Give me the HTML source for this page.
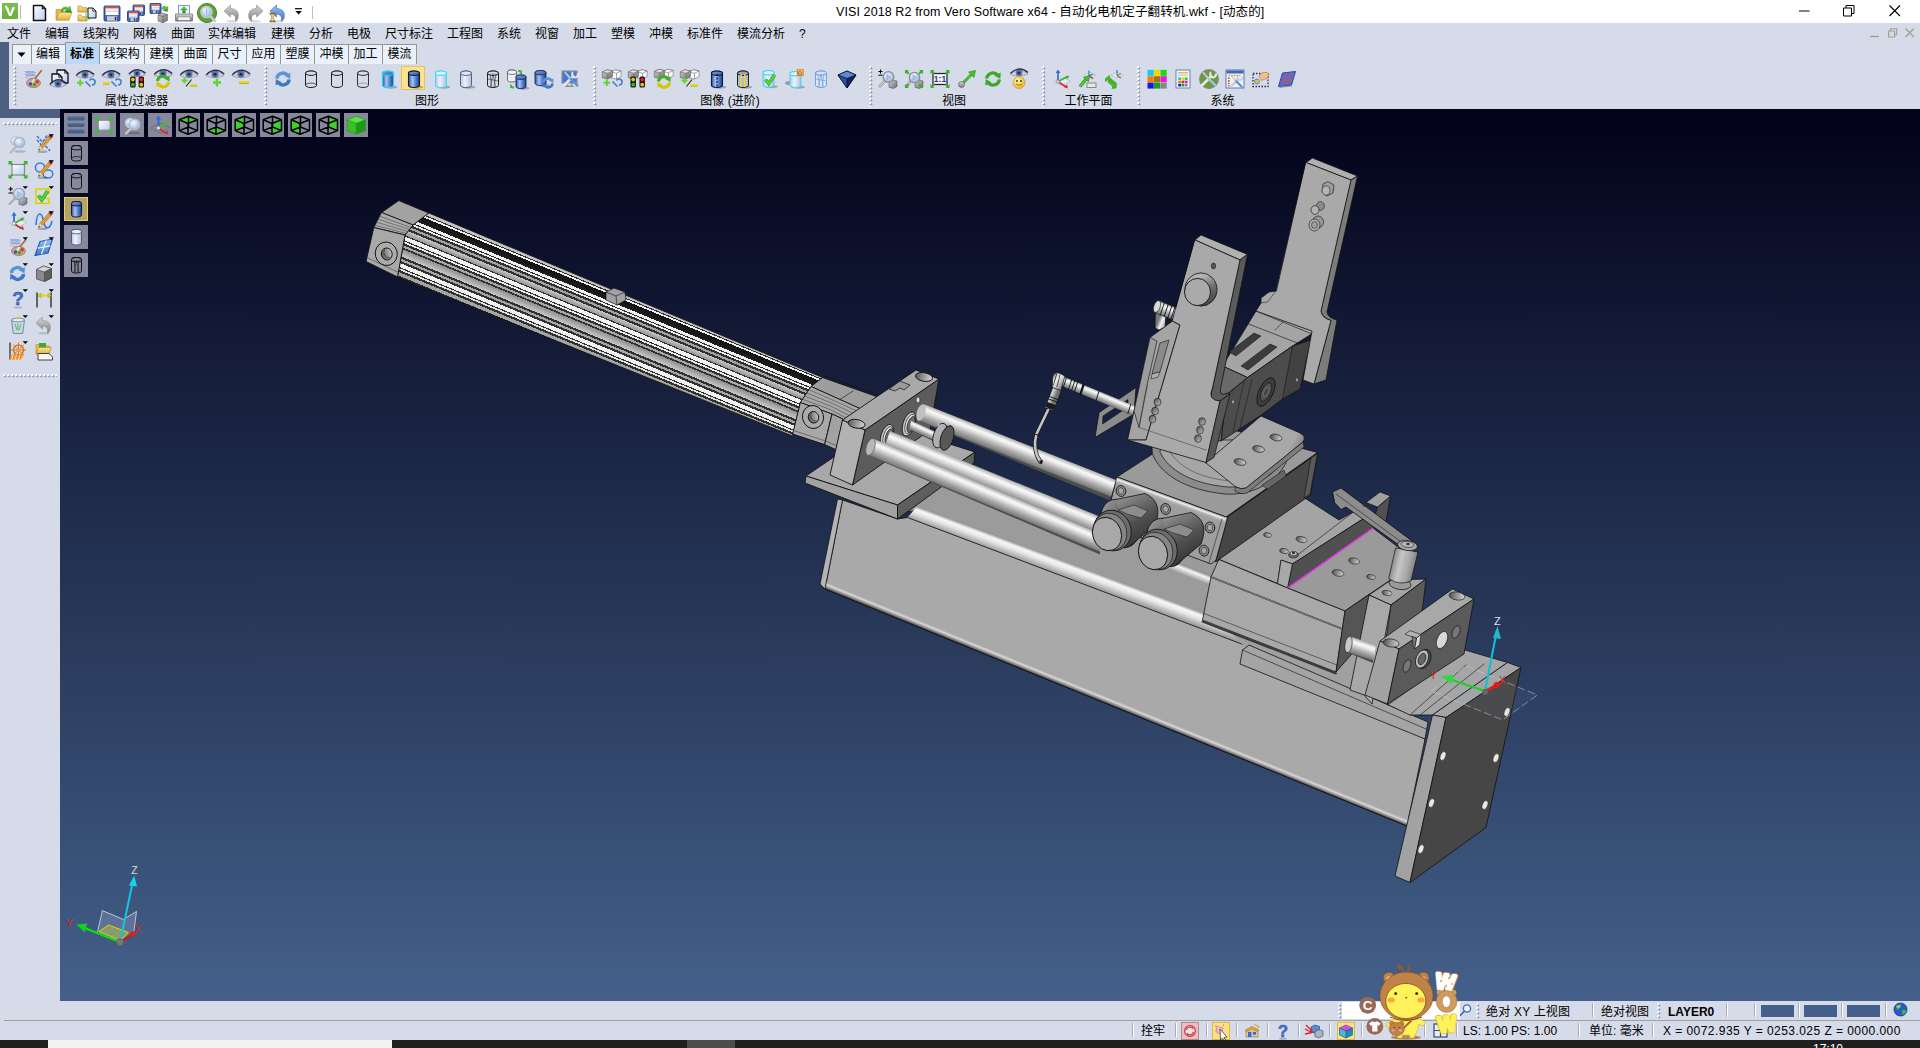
<!DOCTYPE html><html lang="zh"><head><meta charset="utf-8"><title>VISI 2018 R2</title><style>
*{box-sizing:border-box}
html,body{margin:0;padding:0}
body{width:1920px;height:1048px;overflow:hidden;background:#d6dbe9;position:relative;
 font-family:"Liberation Sans","Noto Sans CJK SC",sans-serif;font-size:12px;color:#000;line-height:1}
.abs{position:absolute}
#title{left:0;top:0;width:1920px;height:23px;background:#fff}
#ttext{left:0;top:0;width:1920px;height:23px;white-space:nowrap}
#ttext span{position:absolute;left:836px;top:5px;font-size:12.5px;line-height:15px;letter-spacing:0.1px}
#menu{left:0;top:23px;width:1920px;height:20px;background:#d6dbe9;white-space:nowrap}
#menu span{position:absolute;top:4px;line-height:14px;font-size:12px}
#strip{left:0;top:42px;width:60px;height:76px;background:#4d6082}
#tbbg{left:9px;top:42px;width:1911px;height:67px;background:#d6dbe9}
.tab{position:absolute;top:44px;height:20px;background:#e9f1fc;border:1px solid #9a9685;border-bottom:none;border-right:none;
 font-size:12px;line-height:19px;text-align:center;white-space:nowrap}
.tab.act{top:42px;height:22px;background:#bcd9f7;border:1px solid #9a9685;border-bottom:none;font-weight:bold;line-height:22px;z-index:2}
.grip{position:absolute;width:4px;background-image:radial-gradient(circle at 2.4px 2.4px,#9aa2ba 0.9px,transparent 1.3px),radial-gradient(circle at 1.4px 1.4px,#fff 1px,transparent 1.4px);background-size:4px 4px}
.hgrip{position:absolute;height:4px;background-image:radial-gradient(circle at 2.4px 2.4px,#9aa2ba 0.9px,transparent 1.3px),radial-gradient(circle at 1.4px 1.4px,#fff 1px,transparent 1.4px);background-size:4px 4px}
.glabel{position:absolute;top:94px;height:14px;line-height:14px;font-size:12px;text-align:center;white-space:nowrap;transform:translateX(-50%)}
#left{left:0;top:118px;width:60px;height:882px;background:#d6dbe9}
#vp{left:60px;top:109px;width:1860px;height:892px;background:linear-gradient(to bottom,#020219 0%,#44608a 100%)}
#sb{left:0;top:1001px;width:1920px;height:39px;background:#d6dbe9}
#sbline{left:4px;top:1020px;width:1916px;height:1px;background:#a0a0a0}
.st{position:absolute;white-space:nowrap;font-size:12px;line-height:14px}
#task{left:0;top:1040px;width:1920px;height:8px;background:#1f1f1f}
.vbtn{position:absolute;width:23px;height:23px;background:#8b8ca0}
svg{position:absolute;overflow:visible}
</style></head><body>
<div id="title" class="abs"></div>
<div id="ttext" class="abs"><span>VISI 2018 R2 from Vero Software x64 - 自动化电机定子翻转机.wkf - [动态的]</span></div>
<svg width="0" height="0" style="left:0;top:0"><defs>
<linearGradient id="gB" x1="0" x2="1" y1="0" y2="0"><stop offset="0" stop-color="#2d4f9e"/><stop offset=".35" stop-color="#a9c4f2"/><stop offset=".7" stop-color="#4f78c8"/><stop offset="1" stop-color="#243f86"/></linearGradient>
<linearGradient id="gBt" x1="0" x2="1" y1="0" y2="1"><stop offset="0" stop-color="#7fa0e0"/><stop offset="1" stop-color="#3a5cae"/></linearGradient>
<linearGradient id="gL" x1="0" x2="1" y1="0" y2="0"><stop offset="0" stop-color="#b8c6e6"/><stop offset=".4" stop-color="#eef3fc"/><stop offset="1" stop-color="#aebee0"/></linearGradient>
<linearGradient id="gDoc" x1="0" x2="1" y1="0" y2="1"><stop offset="0" stop-color="#ffffff"/><stop offset="1" stop-color="#b9cdf2"/></linearGradient>
<linearGradient id="gFold" x1="0" x2="0" y1="0" y2="1"><stop offset="0" stop-color="#fbe59a"/><stop offset="1" stop-color="#e3b23c"/></linearGradient>
<linearGradient id="gGrn" x1="0" x2="0" y1="0" y2="1"><stop offset="0" stop-color="#6fe04a"/><stop offset="1" stop-color="#1f8f1a"/></linearGradient>
<linearGradient id="gGry" x1="0" x2="0" y1="0" y2="1"><stop offset="0" stop-color="#d8d8d8"/><stop offset="1" stop-color="#7e7e7e"/></linearGradient>
<linearGradient id="gBlu" x1="0" x2="0" y1="0" y2="1"><stop offset="0" stop-color="#9cc4f0"/><stop offset="1" stop-color="#3f78c4"/></linearGradient>
<linearGradient id="gYel" x1="0" x2="0" y1="0" y2="1"><stop offset="0" stop-color="#fff04a"/><stop offset="1" stop-color="#c8b000"/></linearGradient>
<radialGradient id="gLens" cx=".4" cy=".35" r=".7"><stop offset="0" stop-color="#f4f9ff"/><stop offset="1" stop-color="#8fb0dc"/></radialGradient>
<radialGradient id="gSm" cx=".4" cy=".35" r=".7"><stop offset="0" stop-color="#fff6a0"/><stop offset="1" stop-color="#e8b020"/></radialGradient>
<linearGradient id="gCube" x1="0" x2="1" y1="0" y2="1"><stop offset="0" stop-color="#d0d0d0"/><stop offset="1" stop-color="#6c6c6c"/></linearGradient>
</defs></svg>
<svg style="left:2px;top:3px" width="16" height="16" viewBox="0 0 16 16"><rect x="0" y="0" width="16" height="16" fill="#6db33f"/><rect x="0" y="0" width="16" height="8" fill="#82c455" opacity=".6"/><path d="M3.4 4.2 L6 4.2 L8.2 10.4 L10.4 4.2 L13 4.2 L9.4 13 L7 13 Z" fill="#fff"/><circle cx="4" cy="3.4" r="1" fill="#fff"/></svg>
<div class="abs" style="left:20px;top:5px;width:1px;height:14px;background:#b8b8b8"></div>
<svg style="left:29.5px;top:2.5px" width="20" height="20" viewBox="0 0 20 20"><path d="M3.5 2.5 h8.8 l3.2 3.2 v11.8 h-12 z" fill="url(#gDoc)" stroke="#111" stroke-width="1.5" stroke-linejoin="round"/><path d="M12.3 2.5 v3.2 h3.2" fill="none" stroke="#111" stroke-width="1.05"/></svg>
<svg style="left:54px;top:2.5px" width="20" height="20" viewBox="0 0 20 20"><path d="M2 6.5h5l1.5 1.5h6.5v9h-13z" fill="#e9bd4c" stroke="#b8862a" stroke-width=".6"/><path d="M2 17 l3 -7.5 h13 l-3 7.5z" fill="url(#gFold)" stroke="#b8862a" stroke-width=".6"/><path d="M7 8 C8 3.5 12 3 14.5 5 L16 3 L17.5 9.5 L11 8.5 L13 6.8 C11.5 5.6 9 6 8.5 8.5Z" fill="url(#gGrn)" stroke="#1a7a18" stroke-width=".4"/></svg>
<svg style="left:77px;top:2.5px" width="20" height="20" viewBox="0 0 20 20"><path d="M1 3.3 v5.7 h9 v-4.3 h-4.5 l-1.5 -1.8 h-2.7 z" fill="url(#gFold)" stroke="#b8862a" stroke-width=".7"/><path d="M1 12.3 v5.7 h9 v-4.3 h-4.5 l-1.5 -1.8 h-2.7 z" fill="url(#gFold)" stroke="#b8862a" stroke-width=".7"/><path d="M9 8v8h4" fill="none" stroke="#6ad05a" stroke-width="1"/><path d="M11 5 h4.8 l3.2 3.2 v6.8 h-8 z" fill="url(#gDoc)" stroke="#111" stroke-width="1" stroke-linejoin="round"/><path d="M15.8 5 v3.2 h3.2" fill="none" stroke="#111" stroke-width="0.7"/></svg>
<svg style="left:101.5px;top:2.5px" width="20" height="20" viewBox="0 0 20 20"><rect x="2" y="3" width="16" height="15" rx="1" fill="#4468b4" stroke="#1f2f6a" stroke-width=".8"/><rect x="3.6" y="3.8" width="12.8" height="8.25" fill="#fff"/><rect x="3.6" y="3.8" width="12.8" height="1.6" fill="#e04a3a"/><path d="M4.4 7h11.2 M4.4 8.6h11.2" stroke="#b0b8c8" stroke-width=".6"/><rect x="5" y="13.2" width="10" height="4.5" fill="#c8ccd8"/><rect x="12.8" y="13.8" width="1.6" height="3.3" fill="#26346e"/></svg>
<svg style="left:125.5px;top:2.5px" width="20" height="20" viewBox="0 0 20 20"><rect x="7" y="2" width="11.5" height="10.5" rx="1" fill="#4468b4" stroke="#1f2f6a" stroke-width=".8"/><rect x="8.6" y="2.8" width="8.3" height="5.775" fill="#fff"/><rect x="8.6" y="2.8" width="8.3" height="1.6" fill="#e04a3a"/><path d="M9.4 6h6.7 M9.4 7.6h6.7" stroke="#b0b8c8" stroke-width=".6"/><rect x="10" y="9.14" width="5.5" height="3.15" fill="#c8ccd8"/><rect x="13.3" y="9.56" width="1.6" height="2.31" fill="#26346e"/><rect x="1.5" y="8" width="11.5" height="10.5" rx="1" fill="#4468b4" stroke="#1f2f6a" stroke-width=".8"/><rect x="3.1" y="8.8" width="8.3" height="5.775" fill="#fff"/><rect x="3.1" y="8.8" width="8.3" height="1.6" fill="#e04a3a"/><path d="M3.9 12h6.7 M3.9 13.6h6.7" stroke="#b0b8c8" stroke-width=".6"/><rect x="4.5" y="15.14" width="5.5" height="3.15" fill="#c8ccd8"/><rect x="7.8" y="15.56" width="1.6" height="2.31" fill="#26346e"/></svg>
<svg style="left:149px;top:2.5px" width="20" height="20" viewBox="0 0 20 20"><rect x="1" y="0.5" width="11" height="10" rx="1" fill="#4468b4" stroke="#1f2f6a" stroke-width=".8"/><rect x="2.6" y="1.3" width="7.8" height="5.5" fill="#fff"/><rect x="2.6" y="1.3" width="7.8" height="1.6" fill="#e04a3a"/><path d="M3.4 4.5h6.2 M3.4 6.1h6.2" stroke="#b0b8c8" stroke-width=".6"/><rect x="4" y="7.3" width="5" height="3" fill="#c8ccd8"/><rect x="6.8" y="7.7" width="1.6" height="2.2" fill="#26346e"/><path d="M13 6 C13 3 16 2 17.5 4.5 L19 3.5 L18.5 8.5 L14 7.5 L15.8 6 C15.2 5 14.3 5.2 14 6.5Z" fill="url(#gGrn)" stroke="#1a7a18" stroke-width=".4"/><path d="M9 12 l4.5 -2 l5 1.5 v6 l-4.5 2.3 l-5 -1.6z" fill="url(#gCube)" stroke="#555" stroke-width=".5"/><path d="M9 12 l5 1.6 l4.5 -2.1 M14 13.6 v6.2" stroke="#555" stroke-width=".5" fill="none"/></svg>
<svg style="left:173.5px;top:2.5px" width="20" height="20" viewBox="0 0 20 20"><rect x="4.5" y="2.5" width="11" height="9" fill="#eef4ff" stroke="#6a88c0" stroke-width=".8"/><path d="M10 3.4 l3.2 3.6 h-2 v3 h-2.4 v-3 h-2z" fill="url(#gGrn)" stroke="#1a7a18" stroke-width=".4"/><path d="M1.5 11 h17 v6.5 h-17z" fill="url(#gGry)" stroke="#6a6a6a" stroke-width=".7"/><rect x="4" y="14" width="12" height="3.5" fill="#f4f4f4" stroke="#888" stroke-width=".5"/><rect x="1.5" y="17.5" width="17" height="1.3" fill="#555" opacity=".5"/></svg>
<svg style="left:197px;top:2.5px" width="20" height="20" viewBox="0 0 20 20"><circle cx="10" cy="10" r="9.6" fill="#5f9e3a"/><circle cx="10" cy="10" r="9.6" fill="none" stroke="#4a8a2a" stroke-width="1"/><path d="M13.5 13.5 l4.5 4.5" stroke="#c8c8c8" stroke-width="2.6" stroke-linecap="round"/><circle cx="9.5" cy="9" r="5.6" fill="url(#gLens)" stroke="#c0c8d0" stroke-width="1.4"/><path d="M9.5 6 v3.5 l1 1" stroke="#7a9ac8" stroke-width=".8" fill="none"/></svg>
<svg style="left:222px;top:2.5px" width="20" height="20" viewBox="0 0 20 20"><ellipse cx="10" cy="18.3" rx="6" ry="1.2" fill="#000" opacity=".15"/><path d="M2 8 L8.5 2 V5.5 C14 5.5 17.5 9 16 15 C15.5 17 14 18 13 18 C14.5 15 13 11 8.5 11 V14 Z" fill="url(#gGry)" stroke="#8c8c8c" stroke-width=".6"/></svg>
<svg style="left:244.5px;top:2.5px" width="20" height="20" viewBox="0 0 20 20"><ellipse cx="10" cy="18.3" rx="6" ry="1.2" fill="#000" opacity=".15"/><path d="M2 8 L8.5 2 V5.5 C14 5.5 17.5 9 16 15 C15.5 17 14 18 13 18 C14.5 15 13 11 8.5 11 V14 Z" fill="url(#gGry)" stroke="#8c8c8c" stroke-width=".6" transform="translate(20 0) scale(-1 1)"/></svg>
<svg style="left:268px;top:2.5px" width="20" height="20" viewBox="0 0 20 20"><ellipse cx="10" cy="18.3" rx="6" ry="1.2" fill="#000" opacity=".15"/><path d="M2 8 L8.5 2 V5.5 C14 5.5 17.5 9 16 15 C15.5 17 14 18 13 18 C14.5 15 13 11 8.5 11 V14 Z" fill="url(#gBlu)" stroke="#3a6ab0" stroke-width=".6"/><path d="M1.5 10.5 h6 M1.5 18.5 h6" stroke="#8a6a20" stroke-width="1.3"/><path d="M2.3 11 h4.4 l-1.6 3.5 l1.6 3.5 h-4.4 l1.6 -3.5z" fill="#e8d8a0" stroke="#8a6a20" stroke-width=".6"/></svg>
<svg style="left:295px;top:8px" width="8" height="8" viewBox="0 0 8 8"><path d="M0 0.7h7" stroke="#000" stroke-width="1.2"/><path d="M0.4 3h6.4l-3.2 3.4z" fill="#000"/></svg>
<div class="abs" style="left:312px;top:6px;width:1px;height:13px;background:#c0c0c0"></div>
<svg style="left:1799px;top:10px" width="11" height="2" viewBox="0 0 11 2"><path d="M0 1h10.5" stroke="#000" stroke-width="1"/></svg>
<svg style="left:1843px;top:5px" width="12" height="12" viewBox="0 0 12 12"><path d="M0.5 3h8v8h-8z M3 3v-2.5h8v8h-2.5" fill="none" stroke="#000" stroke-width="1"/></svg>
<svg style="left:1889px;top:5px" width="12" height="12" viewBox="0 0 12 12"><path d="M0.5 0.5l10.5 10.5M11 0.5l-10.5 10.5" stroke="#000" stroke-width="1.1"/></svg>
<div id="menu" class="abs">
<span style="left:7px">文件</span>
<span style="left:45px">编辑</span>
<span style="left:83px">线架构</span>
<span style="left:133px">网格</span>
<span style="left:171px">曲面</span>
<span style="left:208px">实体编辑</span>
<span style="left:271px">建模</span>
<span style="left:309px">分析</span>
<span style="left:347px">电极</span>
<span style="left:385px">尺寸标注</span>
<span style="left:447px">工程图</span>
<span style="left:497px">系统</span>
<span style="left:535px">视窗</span>
<span style="left:573px">加工</span>
<span style="left:611px">塑模</span>
<span style="left:649px">冲模</span>
<span style="left:687px">标准件</span>
<span style="left:737px">模流分析</span>
<span style="left:799px">?</span>
</div>
<svg style="left:1869.5px;top:35px" width="10" height="3" viewBox="0 0 10 3"><path d="M0 1.5h9" stroke="#a49c8c" stroke-width="1.3"/></svg><svg style="left:1888px;top:28px" width="10" height="10" viewBox="0 0 10 10"><path d="M0.6 3h6v6h-6z M2.6 3v-2.3h6v6h-2" fill="none" stroke="#a49c8c" stroke-width="1.1"/></svg><svg style="left:1905px;top:28px" width="10" height="10" viewBox="0 0 10 10"><path d="M0.5 0.5l8.5 8.5M9 0.5l-8.5 8.5" stroke="#a49c8c" stroke-width="1.2"/></svg>
<div id="strip" class="abs"></div><div id="tbbg" class="abs"></div>
<div class="tab" style="left:12px;width:18.5px"><svg style="left:4px;top:7px" width="9" height="6"><path d="M0.5 0.5h8l-4 4.5z" fill="#000"/></svg></div>
<div class="tab" style="left:30.5px;width:34px">编辑</div>
<div class="tab act" style="left:64.5px;width:35px">标准</div>
<div class="tab" style="left:98.5px;width:45.5px">线架构</div>
<div class="tab" style="left:144px;width:34px">建模</div>
<div class="tab" style="left:178px;width:34px">曲面</div>
<div class="tab" style="left:212px;width:34px">尺寸</div>
<div class="tab" style="left:246px;width:34px">应用</div>
<div class="tab" style="left:280px;width:34px">塑膜</div>
<div class="tab" style="left:314px;width:34px">冲模</div>
<div class="tab" style="left:348px;width:34px">加工</div>
<div class="tab" style="left:382px;width:34px">模流</div>
<div class="abs" style="left:416px;top:44px;width:1px;height:20px;background:#9a9685"></div>
<div class="grip" style="left:12.5px;top:66px;height:41px"></div>
<svg style="left:23px;top:68.5px" width="20" height="20" viewBox="0 0 20 20"><path d="M2 2.5 h9 l1.5 1.5 h-9z M2 5.2 h9 l1.5 1.5 h-9z" fill="#a8b8f0" stroke="#6a7ad0" stroke-width=".4"/><path d="M2 8 h9 l1.5 1.6 h-9z" fill="#e8e8e8" stroke="#888" stroke-width=".4"/><ellipse cx="10.5" cy="14" rx="7" ry="4.6" fill="#c8a484" stroke="#8a6040" stroke-width=".6"/><circle cx="7.5" cy="15" r="1.7" fill="#2a50e0"/><circle cx="11.5" cy="15.8" r="1.7" fill="#28b028"/><circle cx="14.2" cy="12.8" r="1.7" fill="#d83030"/><path d="M18.5 1.5 L10.5 11.5" stroke="#a86a30" stroke-width="1.6" stroke-linecap="round"/><path d="M11.6 10 L9 13.4" stroke="#e8e8e8" stroke-width="2"/></svg>
<svg style="left:49px;top:68.5px" width="20" height="20" viewBox="0 0 20 20"><path d="M8 1 h7.8 l3.2 3.2 v9.8 h-11 z" fill="url(#gDoc)" stroke="#111" stroke-width="1.3" stroke-linejoin="round"/><path d="M15.8 1 v3.2 h3.2" fill="none" stroke="#111" stroke-width="0.91"/><path d="M3 5 h6.8 l3.2 3.2 v7.8 h-10 z" fill="url(#gDoc)" stroke="#111" stroke-width="1.3" stroke-linejoin="round"/><path d="M9.8 5 v3.2 h3.2" fill="none" stroke="#111" stroke-width="0.91"/><path d="M0.5 15.94 Q9 8.34 17.5 15.94 Q9 20.5 0.5 15.94Z" fill="#ccd0e6" stroke="#8a6a80" stroke-width=".5"/><circle cx="9" cy="14.8" r="3.496" fill="#5a78a6"/><circle cx="9" cy="14.8" r="1.52" fill="#1e2c4c"/><path d="M1 15.18 Q9 6.82 17.5 14.42" stroke="#2a3250" stroke-width="1.4" fill="none"/></svg>
<svg style="left:75px;top:68.5px" width="20" height="20" viewBox="0 0 20 20"><path d="M0.8 6.94 Q10 -0.66 19.2 6.94 Q10 11.5 0.8 6.94Z" fill="#ccd0e6" stroke="#8a6a80" stroke-width=".5"/><circle cx="10" cy="5.8" r="3.496" fill="#5a78a6"/><circle cx="10" cy="5.8" r="1.52" fill="#1e2c4c"/><path d="M1.3 6.18 Q10 -2.18 19.2 5.42" stroke="#2a3250" stroke-width="1.4" fill="none"/><path d="M2 13.75h6.5 M5.25 10.5v6.5" stroke="#5ed62a" stroke-width="2" fill="none"/><path d="M10.5 12.5 l5 5 M14.5 11.5 a3 3 0 1 1 2.5 4.5" stroke="#3f7ad0" stroke-width="1.5" fill="none"/></svg>
<svg style="left:101px;top:68.5px" width="20" height="20" viewBox="0 0 20 20"><path d="M0.8 6.94 Q10 -0.66 19.2 6.94 Q10 11.5 0.8 6.94Z" fill="#ccd0e6" stroke="#8a6a80" stroke-width=".5"/><circle cx="10" cy="5.8" r="3.496" fill="#5a78a6"/><circle cx="10" cy="5.8" r="1.52" fill="#1e2c4c"/><path d="M1.3 6.18 Q10 -2.18 19.2 5.42" stroke="#2a3250" stroke-width="1.4" fill="none"/><path d="M2 14.5h6.5" stroke="#a89a00" stroke-width="2"/><path d="M2 14h6.5" stroke="#f0e000" stroke-width="1.6"/><path d="M10.5 12.5 l5 5 M14.5 11.5 a3 3 0 1 1 2.5 4.5" stroke="#3f7ad0" stroke-width="1.5" fill="none"/></svg>
<svg style="left:127px;top:68.5px" width="20" height="20" viewBox="0 0 20 20"><path d="M1.5 5.55 Q10 -1.45 18.5 5.55 Q10 9.75 1.5 5.55Z" fill="#ccd0e6" stroke="#8a6a80" stroke-width=".5"/><circle cx="10" cy="4.5" r="3.22" fill="#5a78a6"/><circle cx="10" cy="4.5" r="1.4" fill="#1e2c4c"/><path d="M2 4.85 Q10 -2.85 18.5 4.15" stroke="#2a3250" stroke-width="1.4" fill="none"/><rect x="3.2" y="7.5" width="5.4" height="11" rx="1.5" fill="#111"/><circle cx="5.9" cy="10.5" r="1.9" fill="#f0c000"/><circle cx="5.9" cy="15.7" r="1.9" fill="#20c820"/><rect x="11.6" y="7.5" width="5.4" height="11" rx="1.5" fill="#111"/><circle cx="14.3" cy="10.5" r="1.9" fill="#e02020"/><circle cx="14.3" cy="15.7" r="1.9" fill="#f0c000"/></svg>
<svg style="left:153px;top:68.5px" width="20" height="20" viewBox="0 0 20 20"><path d="M0.8 5.94 Q10 -1.66 19.2 5.94 Q10 10.5 0.8 5.94Z" fill="#ccd0e6" stroke="#8a6a80" stroke-width=".5"/><circle cx="10" cy="4.8" r="3.496" fill="#5a78a6"/><circle cx="10" cy="4.8" r="1.52" fill="#1e2c4c"/><path d="M1.3 5.18 Q10 -3.18 19.2 4.42" stroke="#2a3250" stroke-width="1.4" fill="none"/><path d="M4.4 12 A5.6 5.6 0 0 1 14.2 9.14" stroke="#3eb02a" stroke-width="3" fill="none"/><path d="M11.12 9.42 l5.6 -2.52 l-0.28 5.6 z" fill="#3eb02a"/><path d="M15.6 13 A5.6 5.6 0 0 1 5.8 15.86" stroke="#d8c400" stroke-width="3" fill="none"/><path d="M8.88 15.58 l-5.6 2.52 l0.28 -5.6 z" fill="#d8c400"/></svg>
<svg style="left:179px;top:68.5px" width="20" height="20" viewBox="0 0 20 20"><path d="M0.8 6.44 Q10 -1.16 19.2 6.44 Q10 11 0.8 6.44Z" fill="#ccd0e6" stroke="#8a6a80" stroke-width=".5"/><circle cx="10" cy="5.3" r="3.496" fill="#5a78a6"/><circle cx="10" cy="5.3" r="1.52" fill="#1e2c4c"/><path d="M1.3 5.68 Q10 -2.68 19.2 4.92" stroke="#2a3250" stroke-width="1.4" fill="none"/><path d="M2.5 11.5h6 M5.5 8.5v6" stroke="#5ed62a" stroke-width="2" fill="none"/><path d="M7 17.5 L12.5 10.5" stroke="#222" stroke-width="1.1"/><path d="M11 16.5h7" stroke="#a89a00" stroke-width="2"/><path d="M11 16h7" stroke="#f0e000" stroke-width="1.6"/></svg>
<svg style="left:205px;top:68.5px" width="20" height="20" viewBox="0 0 20 20"><path d="M0.8 6.44 Q10 -1.16 19.2 6.44 Q10 11 0.8 6.44Z" fill="#ccd0e6" stroke="#8a6a80" stroke-width=".5"/><circle cx="10" cy="5.3" r="3.496" fill="#5a78a6"/><circle cx="10" cy="5.3" r="1.52" fill="#1e2c4c"/><path d="M1.3 5.68 Q10 -2.68 19.2 4.92" stroke="#2a3250" stroke-width="1.4" fill="none"/><path d="M8 13.5h8 M12 9.5v8" stroke="#5ed62a" stroke-width="2.4" fill="none"/></svg>
<svg style="left:231px;top:68.5px" width="20" height="20" viewBox="0 0 20 20"><path d="M0.8 6.44 Q10 -1.16 19.2 6.44 Q10 11 0.8 6.44Z" fill="#ccd0e6" stroke="#8a6a80" stroke-width=".5"/><circle cx="10" cy="5.3" r="3.496" fill="#5a78a6"/><circle cx="10" cy="5.3" r="1.52" fill="#1e2c4c"/><path d="M1.3 5.68 Q10 -2.68 19.2 4.92" stroke="#2a3250" stroke-width="1.4" fill="none"/><path d="M8.5 13.5h9" stroke="#a89a00" stroke-width="2.4"/><path d="M8.5 13h9" stroke="#f0e000" stroke-width="1.92"/></svg>
<div class="glabel" style="left:136.5px">属性/过滤器</div>
<div class="grip" style="left:263.5px;top:66px;height:41px"></div>
<svg style="left:273px;top:68.5px" width="20" height="20" viewBox="0 0 20 20"><path d="M3.8 9.5 A6.2 6.2 0 0 1 14.65 6.28" stroke="#5a94d8" stroke-width="3.4" fill="none"/><path d="M11.24 6.59 l6.2 -2.79 l-0.31 6.2 z" fill="#5a94d8"/><path d="M16.2 10.5 A6.2 6.2 0 0 1 5.35 13.72" stroke="#3f78c4" stroke-width="3.4" fill="none"/><path d="M8.76 13.41 l-6.2 2.79 l0.31 -6.2 z" fill="#3f78c4"/></svg>
<svg style="left:300.5px;top:68.5px" width="20" height="20" viewBox="0 0 20 20"><path d="M4.5 4.2 A5.5 2.2 0 0 1 15.5 4.2 V16.3 A5.5 2.2 0 0 1 4.5 16.3Z" fill="#d6dbe9" stroke="#222" stroke-width="1"/><ellipse cx="10" cy="4.2" rx="5.5" ry="2.2" fill="#d6dbe9" stroke="#222" stroke-width="1"/><path d="M4.5 16.3 A5.5 2.2 0 0 1 15.5 16.3" fill="none" stroke="#222" stroke-width=".7"/></svg>
<svg style="left:326.5px;top:68.5px" width="20" height="20" viewBox="0 0 20 20"><path d="M4.5 4.2 A5.5 2.2 0 0 1 15.5 4.2 V16.3 A5.5 2.2 0 0 1 4.5 16.3Z" fill="#d6dbe9" stroke="#222" stroke-width="1"/><ellipse cx="10" cy="4.2" rx="5.5" ry="2.2" fill="#d6dbe9" stroke="#222" stroke-width="1"/></svg>
<svg style="left:352.5px;top:68.5px" width="20" height="20" viewBox="0 0 20 20"><path d="M4.5 4.2 A5.5 2.2 0 0 1 15.5 4.2 V16.3 A5.5 2.2 0 0 1 4.5 16.3Z" fill="#d6dbe9" stroke="#333" stroke-width="1"/><ellipse cx="10" cy="4.2" rx="5.5" ry="2.2" fill="#d6dbe9" stroke="#333" stroke-width="1"/><path d="M4.5 16.3 A5.5 2.2 0 0 1 15.5 16.3" fill="none" stroke="#888" stroke-width=".7"/></svg>
<svg style="left:378px;top:68.5px" width="20" height="20" viewBox="0 0 20 20"><ellipse cx="12.75" cy="18.2" rx="6.6" ry="1.6" fill="#000" opacity=".25"/><path d="M4.5 4.2 A5.5 2.2 0 0 1 15.5 4.2 V16.3 A5.5 2.2 0 0 1 4.5 16.3Z" fill="url(#gB)" stroke="#20d8f0" stroke-width="1.2"/><ellipse cx="10" cy="4.2" rx="5.5" ry="2.2" fill="url(#gBt)" stroke="#20d8f0" stroke-width="1.2"/></svg>
<div class="abs" style="left:401px;top:66px;width:24px;height:24px;background:#fde38a;border:1px solid #e8c25a"></div>
<svg style="left:403.5px;top:68.5px" width="20" height="20" viewBox="0 0 20 20"><ellipse cx="12.75" cy="18.2" rx="6.6" ry="1.6" fill="#000" opacity=".25"/><path d="M4.5 4.2 A5.5 2.2 0 0 1 15.5 4.2 V16.3 A5.5 2.2 0 0 1 4.5 16.3Z" fill="url(#gB)" stroke="#0e1a3a" stroke-width="1.1"/><ellipse cx="10" cy="4.2" rx="5.5" ry="2.2" fill="url(#gBt)" stroke="#0e1a3a" stroke-width="1.1"/></svg>
<svg style="left:430.5px;top:68.5px" width="20" height="20" viewBox="0 0 20 20"><ellipse cx="12.75" cy="18.2" rx="6.6" ry="1.6" fill="#000" opacity=".25"/><path d="M4.5 4.2 A5.5 2.2 0 0 1 15.5 4.2 V16.3 A5.5 2.2 0 0 1 4.5 16.3Z" fill="url(#gL)" stroke="#40dcf0" stroke-width="1.1"/><ellipse cx="10" cy="4.2" rx="5.5" ry="2.2" fill="#e4ecfa" stroke="#40dcf0" stroke-width="1.1"/></svg>
<svg style="left:456px;top:68.5px" width="20" height="20" viewBox="0 0 20 20"><ellipse cx="12.75" cy="18.2" rx="6.6" ry="1.6" fill="#000" opacity=".25"/><path d="M4.5 4.2 A5.5 2.2 0 0 1 15.5 4.2 V16.3 A5.5 2.2 0 0 1 4.5 16.3Z" fill="url(#gL)" stroke="#4a5a78" stroke-width="0.9"/><ellipse cx="10" cy="4.2" rx="5.5" ry="2.2" fill="#dfe7f6" stroke="#4a5a78" stroke-width="0.9"/></svg>
<svg style="left:482.5px;top:68.5px" width="20" height="20" viewBox="0 0 20 20"><path d="M4.5 4.2 A5.5 2.2 0 0 1 15.5 4.2 V16.3 A5.5 2.2 0 0 1 4.5 16.3Z" fill="#d6dbe9" stroke="#222" stroke-width="1"/><ellipse cx="10" cy="4.2" rx="5.5" ry="2.2" fill="#d6dbe9" stroke="#222" stroke-width="1"/><path d="M7 4.5 L8.5 18 M10 4.5 L7.5 18 M10 4.5 L12.5 18 M13 4.5 L11 18 M5 10 L15 12" stroke="#333" stroke-width=".6" fill="none"/></svg>
<svg style="left:507px;top:68.5px" width="20" height="20" viewBox="0 0 20 20"><path d="M0.5 3.2 A4.5 2.2 0 0 1 9.5 3.2 V10.8 A4.5 2.2 0 0 1 0.5 10.8Z" fill="#eef0f6" stroke="#555" stroke-width="0.8"/><ellipse cx="5" cy="3.2" rx="4.5" ry="2.2" fill="#f6f8fc" stroke="#555" stroke-width="0.8"/><ellipse cx="16.5" cy="19.2" rx="6" ry="1.6" fill="#000" opacity=".25"/><path d="M9 8.2 A5 2.2 0 0 1 19 8.2 V17.3 A5 2.2 0 0 1 9 17.3Z" fill="url(#gB)" stroke="#1a2a5a" stroke-width="0.9"/><ellipse cx="14" cy="8.2" rx="5" ry="2.2" fill="url(#gBt)" stroke="#1a2a5a" stroke-width="0.9"/><path d="M11 1 l4 .5 l-1 3.5z M7 19.5 l-4 -.5 l1 -3.5z" fill="#3cb82a"/><path d="M11 2 q3 0 3.5 3 M7 18.5 q-3 0 -3.5 -3" stroke="#3cb82a" stroke-width="1.4" fill="none"/></svg>
<svg style="left:534px;top:68.5px" width="20" height="20" viewBox="0 0 20 20"><ellipse cx="9.25" cy="16.2" rx="6.6" ry="1.6" fill="#000" opacity=".25"/><path d="M1 3.7 A5.5 2.2 0 0 1 12 3.7 V14.3 A5.5 2.2 0 0 1 1 14.3Z" fill="url(#gB)" stroke="#1a2a5a" stroke-width="0.9"/><ellipse cx="6.5" cy="3.7" rx="5.5" ry="2.2" fill="url(#gBt)" stroke="#1a2a5a" stroke-width="0.9"/><g transform="translate(4 4)"><path d="M5.4 9.5 A4.6 4.6 0 0 1 13.45 7.24" stroke="#5a94d8" stroke-width="2.6" fill="none"/><path d="M10.92 7.47 l4.6 -2.07 l-0.23 4.6 z" fill="#5a94d8"/><path d="M14.6 10.5 A4.6 4.6 0 0 1 6.55 12.76" stroke="#3f78c4" stroke-width="2.6" fill="none"/><path d="M9.08 12.53 l-4.6 2.07 l0.23 -4.6 z" fill="#3f78c4"/></g></svg>
<svg style="left:560px;top:68.5px" width="20" height="20" viewBox="0 0 20 20"><rect x="2" y="2" width="15" height="12" fill="#4a78c8" stroke="#8a8f98" stroke-width="1.2"/><path d="M7 14v3h5v-3M5 17.5h9" stroke="#8a8f98" stroke-width="1.2" fill="none"/><g transform="translate(11 10) scale(1.15)"><path d="M-6 5.5 L2 -2.5" stroke="#dfe4ea" stroke-width="2.4" stroke-linecap="round"/><circle cx="3.5" cy="-4" r="2.6" fill="none" stroke="#dfe4ea" stroke-width="1.8" stroke-dasharray="11 5" transform="rotate(-20 3.5 -4)"/><path d="M5.5 5.5 L-1 -1" stroke="#5b8fd0" stroke-width="2.2" stroke-linecap="round"/><path d="M-1 -1 L-5 -5.5" stroke="#c9ced6" stroke-width="1.5" stroke-linecap="round"/></g></svg>
<div class="glabel" style="left:427px">图形</div>
<div class="grip" style="left:592.5px;top:66px;height:41px"></div>
<svg style="left:602px;top:68.5px" width="20" height="20" viewBox="0 0 20 20"><path d="M8.9 3 l4.6 -2.2 l5.6 1.2 v5.6 l-4.6 2.4 l-5.6 -1.2z" fill="#fafafa" stroke="#555" stroke-width=".5"/><path d="M8.9 3 l5.6 1.2 l4.6 -2.2 l-5.6 -1.2z" fill="#fff" stroke="#555" stroke-width=".5"/><path d="M14.5 4.2 v5.8" stroke="#555" stroke-width=".5" fill="none"/><path d="M0.3 3 l4.6 -2.2 l5.6 1.2 v5.6 l-4.6 2.4 l-5.6 -1.2z" fill="url(#gCube)" stroke="#555" stroke-width=".5"/><path d="M0.3 3 l5.6 1.2 l4.6 -2.2 l-5.6 -1.2z" fill="#e0e0e0" stroke="#555" stroke-width=".5"/><path d="M5.9 4.2 v5.8" stroke="#555" stroke-width=".5" fill="none"/><path d="M1.5 13.75h6.5 M4.75 10.5v6.5" stroke="#5ed62a" stroke-width="2" fill="none"/><path d="M10.5 12.5 l5 5 M14.5 11.5 a3 3 0 1 1 2.5 4.5" stroke="#3f7ad0" stroke-width="1.5" fill="none"/></svg>
<svg style="left:628px;top:68.5px" width="20" height="20" viewBox="0 0 20 20"><path d="M8.9 3 l4.6 -2.2 l5.6 1.2 v5.6 l-4.6 2.4 l-5.6 -1.2z" fill="#fafafa" stroke="#555" stroke-width=".5"/><path d="M8.9 3 l5.6 1.2 l4.6 -2.2 l-5.6 -1.2z" fill="#fff" stroke="#555" stroke-width=".5"/><path d="M14.5 4.2 v5.8" stroke="#555" stroke-width=".5" fill="none"/><path d="M0.3 3 l4.6 -2.2 l5.6 1.2 v5.6 l-4.6 2.4 l-5.6 -1.2z" fill="url(#gCube)" stroke="#555" stroke-width=".5"/><path d="M0.3 3 l5.6 1.2 l4.6 -2.2 l-5.6 -1.2z" fill="#e0e0e0" stroke="#555" stroke-width=".5"/><path d="M5.9 4.2 v5.8" stroke="#555" stroke-width=".5" fill="none"/><rect x="2.5" y="7.5" width="5.4" height="11" rx="1.5" fill="#111"/><circle cx="5.2" cy="10.5" r="1.9" fill="#f0c000"/><circle cx="5.2" cy="15.7" r="1.9" fill="#20c820"/><rect x="11.5" y="7.5" width="5.4" height="11" rx="1.5" fill="#111"/><circle cx="14.2" cy="10.5" r="1.9" fill="#e02020"/><circle cx="14.2" cy="15.7" r="1.9" fill="#f0c000"/></svg>
<svg style="left:654px;top:68.5px" width="20" height="20" viewBox="0 0 20 20"><path d="M8.9 2.5 l4.6 -2.2 l5.6 1.2 v5.6 l-4.6 2.4 l-5.6 -1.2z" fill="#fafafa" stroke="#555" stroke-width=".5"/><path d="M8.9 2.5 l5.6 1.2 l4.6 -2.2 l-5.6 -1.2z" fill="#fff" stroke="#555" stroke-width=".5"/><path d="M14.5 3.7 v5.8" stroke="#555" stroke-width=".5" fill="none"/><path d="M0.3 2.5 l4.6 -2.2 l5.6 1.2 v5.6 l-4.6 2.4 l-5.6 -1.2z" fill="url(#gCube)" stroke="#555" stroke-width=".5"/><path d="M0.3 2.5 l5.6 1.2 l4.6 -2.2 l-5.6 -1.2z" fill="#e0e0e0" stroke="#555" stroke-width=".5"/><path d="M5.9 3.7 v5.8" stroke="#555" stroke-width=".5" fill="none"/><path d="M4.4 12.5 A5.6 5.6 0 0 1 14.2 9.64" stroke="#3eb02a" stroke-width="3" fill="none"/><path d="M11.12 9.92 l5.6 -2.52 l-0.28 5.6 z" fill="#3eb02a"/><path d="M15.6 13.5 A5.6 5.6 0 0 1 5.8 16.36" stroke="#d8c400" stroke-width="3" fill="none"/><path d="M8.88 16.08 l-5.6 2.52 l0.28 -5.6 z" fill="#d8c400"/></svg>
<svg style="left:680px;top:68.5px" width="20" height="20" viewBox="0 0 20 20"><path d="M8.9 3 l4.6 -2.2 l5.6 1.2 v5.6 l-4.6 2.4 l-5.6 -1.2z" fill="#fafafa" stroke="#555" stroke-width=".5"/><path d="M8.9 3 l5.6 1.2 l4.6 -2.2 l-5.6 -1.2z" fill="#fff" stroke="#555" stroke-width=".5"/><path d="M14.5 4.2 v5.8" stroke="#555" stroke-width=".5" fill="none"/><path d="M0.3 3 l4.6 -2.2 l5.6 1.2 v5.6 l-4.6 2.4 l-5.6 -1.2z" fill="url(#gCube)" stroke="#555" stroke-width=".5"/><path d="M0.3 3 l5.6 1.2 l4.6 -2.2 l-5.6 -1.2z" fill="#e0e0e0" stroke="#555" stroke-width=".5"/><path d="M5.9 4.2 v5.8" stroke="#555" stroke-width=".5" fill="none"/><path d="M1.5 11.5h6 M4.5 8.5v6" stroke="#5ed62a" stroke-width="2" fill="none"/><path d="M6.5 17.5 L12 10.5" stroke="#222" stroke-width="1.1"/><path d="M10.5 16.5h7" stroke="#a89a00" stroke-width="2"/><path d="M10.5 16h7" stroke="#f0e000" stroke-width="1.6"/></svg>
<svg style="left:707px;top:68.5px" width="20" height="20" viewBox="0 0 20 20"><ellipse cx="12.75" cy="18.2" rx="6.6" ry="1.6" fill="#000" opacity=".25"/><path d="M4.5 4.2 A5.5 2.2 0 0 1 15.5 4.2 V16.3 A5.5 2.2 0 0 1 4.5 16.3Z" fill="url(#gB)" stroke="#0e1a3a" stroke-width="1.1"/><ellipse cx="10" cy="4.2" rx="5.5" ry="2.2" fill="url(#gBt)" stroke="#0e1a3a" stroke-width="1.1"/><path d="M10 5 v13" stroke="#0e1a3a" stroke-width="1.2" stroke-dasharray="2 1.5"/></svg>
<svg style="left:733px;top:68.5px" width="20" height="20" viewBox="0 0 20 20"><ellipse cx="12.75" cy="18.2" rx="6.6" ry="1.6" fill="#000" opacity=".25"/><path d="M4.5 4.2 A5.5 2.2 0 0 1 15.5 4.2 V16.3 A5.5 2.2 0 0 1 4.5 16.3Z" fill="#b8bcc8" stroke="#222" stroke-width="1"/><ellipse cx="10" cy="4.2" rx="5.5" ry="2.2" fill="#9aa2c0" stroke="#222" stroke-width="1"/><path d="M8.2 5 v13 M11.8 5 v13" stroke="#e8d83a" stroke-width="1.5"/></svg>
<svg style="left:759px;top:68.5px" width="20" height="20" viewBox="0 0 20 20"><ellipse cx="12.25" cy="17.7" rx="6.6" ry="1.6" fill="#000" opacity=".25"/><path d="M4 3.7 A5.5 2.2 0 0 1 15 3.7 V15.8 A5.5 2.2 0 0 1 4 15.8Z" fill="url(#gL)" stroke="#40dcf0" stroke-width="1.1"/><ellipse cx="9.5" cy="3.7" rx="5.5" ry="2.2" fill="#e4ecfa" stroke="#40dcf0" stroke-width="1.1"/><path d="M6.5 10.5 l3.2 4.2 l6 -8.8" stroke="#2a9a1a" stroke-width="3.4" fill="none"/><path d="M6.5 10.5 l3.2 4.2 l6 -8.8" stroke="#5ad83a" stroke-width="2" fill="none"/></svg>
<svg style="left:785px;top:68.5px" width="20" height="20" viewBox="0 0 20 20"><ellipse cx="5" cy="14" rx="5" ry="2" fill="#000" opacity=".3"/><ellipse cx="13.25" cy="18.2" rx="6.6" ry="1.6" fill="#000" opacity=".25"/><path d="M5 4.7 A5.5 2.2 0 0 1 16 4.7 V16.3 A5.5 2.2 0 0 1 5 16.3Z" fill="url(#gL)" stroke="#40dcf0" stroke-width="1.1"/><ellipse cx="10.5" cy="4.7" rx="5.5" ry="2.2" fill="#e4ecfa" stroke="#40dcf0" stroke-width="1.1"/><rect x="12.5" y="0.8" width="5.6" height="5.6" fill="#f4d8a0" stroke="#d88a18" stroke-width="1.2"/><circle cx="15" cy="4" r="1.5" fill="none" stroke="#d83a1a" stroke-width=".9"/></svg>
<svg style="left:811px;top:68.5px" width="20" height="20" viewBox="0 0 20 20"><path d="M4.5 4.2 A5.5 2.2 0 0 1 15.5 4.2 V16.3 A5.5 2.2 0 0 1 4.5 16.3Z" fill="#dbe3f4" stroke="#6a9ae0" stroke-width="0.9"/><ellipse cx="10" cy="4.2" rx="5.5" ry="2.2" fill="#dbe3f4" stroke="#6a9ae0" stroke-width="0.9"/><path d="M7 4.5 L8.5 18 M10 4.5 L7.5 18 M10 4.5 L12.5 18 M13 4.5 L11 18 M5 10 L15 12" stroke="#6a9ae0" stroke-width=".6" fill="none"/></svg>
<svg style="left:837px;top:68.5px" width="20" height="20" viewBox="0 0 20 20"><path d="M1 6 L10 2 L19 6 L10 19Z" fill="#1a3a7a" stroke="#0a1430" stroke-width=".8"/><path d="M1 6 L10 2 L19 6 L10 9.5Z" fill="#5a8ad8"/><path d="M10 9.5 L19 6 L10 19Z" fill="#12285a"/><path d="M1 6 L10 9.5 L10 19Z" fill="#2a54a8"/><path d="M1 6 L10 2 L19 6 L10 19Z M1 6 L10 9.5 L19 6 M10 9.5V19" fill="none" stroke="#0a1430" stroke-width=".8" stroke-linejoin="round"/></svg>
<div class="glabel" style="left:730px">图像 (进阶)</div>
<div class="grip" style="left:869px;top:66px;height:41px"></div>
<svg style="left:878px;top:68.5px" width="20" height="20" viewBox="0 0 20 20"><path d="M0.5 2.5h4M2.5 0.5v4M0.5 6.2h4" stroke="#000" stroke-width="1"/><path d="M11 12.5 l3.5 -1.5 l4.5 1 v5.5 l-3.5 2 l-4.5 -1.2z" fill="url(#gCube)" stroke="#444" stroke-width=".5"/><path d="M6.72 11.78 l-5 5.5" stroke="#9a9a9a" stroke-width="2.6" stroke-linecap="round"/><path d="M6.72 11.78 l-5 5.5" stroke="#e8e8e8" stroke-width="1" stroke-linecap="round"/><circle cx="10.5" cy="8" r="5.4" fill="url(#gLens)" stroke="#8a8f98" stroke-width="1.3"/><path d="M9 5.5 l3.5 2.5 l-3.5 2.5z" fill="#b8c8e0" stroke="#7a8aa8" stroke-width=".5"/></svg>
<svg style="left:904px;top:68.5px" width="20" height="20" viewBox="0 0 20 20"><path d="M11 12.5 l3.5 -1.5 l4.5 1 v5.5 l-3.5 2 l-4.5 -1.2z" fill="url(#gCube)" stroke="#444" stroke-width=".5"/><path d="M6.86 12.14 l-5 5.5" stroke="#9a9a9a" stroke-width="2.6" stroke-linecap="round"/><path d="M6.86 12.14 l-5 5.5" stroke="#e8e8e8" stroke-width="1" stroke-linecap="round"/><circle cx="10.5" cy="8.5" r="5.2" fill="url(#gLens)" stroke="#8a8f98" stroke-width="1.3"/><path d="M9 6 l3.5 2.5 l-3.5 2.5z" fill="#b8c8e0" stroke="#7a8aa8" stroke-width=".5"/><path d="M1 1l4 0l-1.3 1.3l1.8 1.8l-1.4 1.4l-1.8 -1.8l-1.3 1.3z" fill="#38b028"/><path d="M19 1l-4 0l1.3 1.3l-1.8 1.8l1.4 1.4l1.8 -1.8l1.3 1.3z" fill="#38b028"/><path d="M1 19l4 0l-1.3 -1.3l1.8 -1.8l-1.4 -1.4l-1.8 1.8l-1.3 -1.3z" fill="#38b028"/><path d="M19 19l-4 0l1.3 -1.3l-1.8 -1.8l1.4 -1.4l1.8 1.8l1.3 -1.3z" fill="#38b028"/></svg>
<svg style="left:930px;top:68.5px" width="20" height="20" viewBox="0 0 20 20"><rect x="3" y="4.5" width="14" height="11" fill="#eef2fc" stroke="#222" stroke-width="1.2"/><text x="10" y="13.4" font-size="8.5" font-weight="bold" text-anchor="middle" fill="#3a3a8a" font-family="Liberation Sans,sans-serif">1:1</text><path d="M0.5 1l4 0l-1.3 1.3l1.8 1.8l-1.4 1.4l-1.8 -1.8l-1.3 1.3z" fill="#38b028"/><path d="M19.5 1l-4 0l1.3 1.3l-1.8 1.8l1.4 1.4l1.8 -1.8l1.3 1.3z" fill="#38b028"/><path d="M0.5 19l4 0l-1.3 -1.3l1.8 -1.8l-1.4 -1.4l-1.8 1.8l-1.3 -1.3z" fill="#38b028"/><path d="M19.5 19l-4 0l1.3 -1.3l-1.8 -1.8l1.4 -1.4l1.8 1.8l1.3 -1.3z" fill="#38b028"/></svg>
<svg style="left:957px;top:68.5px" width="20" height="20" viewBox="0 0 20 20"><path d="M4 16 L15 5" stroke="#2a8a1a" stroke-width="2.6"/><path d="M4 16 L15 5" stroke="#58d038" stroke-width="1.4"/><path d="M18.5 1.5 l-1.5 7 l-5.5 -5.5z" fill="#48c028" stroke="#2a8a1a" stroke-width=".6"/><circle cx="4.5" cy="15.5" r="3" fill="url(#gGry)" stroke="#555" stroke-width=".6"/></svg>
<svg style="left:983px;top:68.5px" width="20" height="20" viewBox="0 0 20 20"><path d="M3.6 9.5 A6.4 6.4 0 0 1 14.8 6.16" stroke="#3aa828" stroke-width="3.2" fill="none"/><path d="M11.28 6.48 l6.4 -2.88 l-0.32 6.4 z" fill="#3aa828"/><path d="M16.4 10.5 A6.4 6.4 0 0 1 5.2 13.84" stroke="#3aa828" stroke-width="3.2" fill="none"/><path d="M8.72 13.52 l-6.4 2.88 l0.32 -6.4 z" fill="#3aa828"/></svg>
<svg style="left:1009px;top:68.5px" width="20" height="20" viewBox="0 0 20 20"><path d="M1 5.01 Q10 -2.39 19 5.01 Q10 9.45 1 5.01Z" fill="#ccd0e6" stroke="#8a6a80" stroke-width=".5"/><circle cx="10" cy="3.9" r="3.404" fill="#5a78a6"/><circle cx="10" cy="3.9" r="1.48" fill="#1e2c4c"/><path d="M1.5 4.27 Q10 -3.87 19 3.53" stroke="#2a3250" stroke-width="1.4" fill="none"/><circle cx="10" cy="13.5" r="6" fill="url(#gSm)" stroke="#c89018" stroke-width=".6"/><circle cx="8" cy="12" r=".9" fill="#333"/><circle cx="12" cy="12" r=".9" fill="#333"/><path d="M7 15 q3 2.6 6 0" stroke="#8a5a10" stroke-width=".8" fill="none"/></svg>
<div class="glabel" style="left:954px">视图</div>
<div class="grip" style="left:1042px;top:66px;height:41px"></div>
<svg style="left:1052px;top:68.5px" width="20" height="20" viewBox="0 0 20 20"><path d="M1.5 12.5 l9 -4 l8 3.5 l-9 4.5z" fill="#e8ecf6" stroke="#a8b0c4" stroke-width=".6"/><path d="M6 12.5 V2.5" stroke="#2a6ad8" stroke-width="1.6"/><path d="M6 0.5l-2.4 3.6h4.8z" fill="#2a6ad8"/><path d="M6 12.5 L15 8" stroke="#38b028" stroke-width="1.6"/><path d="M17.5 6.8l-4 .3l1.8 3z" fill="#38b028"/><path d="M6 12.5 L14 18" stroke="#d82a2a" stroke-width="1.6"/><path d="M16 19.5l-1 -4l-2.6 2.8z" fill="#d82a2a"/><circle cx="6" cy="12.5" r="1.6" fill="#ddd" stroke="#666" stroke-width=".5"/></svg>
<svg style="left:1078px;top:68.5px" width="20" height="20" viewBox="0 0 20 20"><path d="M5 6.5 l7 -3 l6 2.6 l-7 3.4z" fill="#e8ecf6" stroke="#a8b0c4" stroke-width=".6"/><path d="M11 7 V1.5 M11 7 l4 -2 M11 7 l4 2.6" stroke-width="1.1" stroke="#2a6ad8" fill="none"/><path d="M11 7 l4 -2" stroke="#38b028" stroke-width="1.1"/><path d="M11 7 l4 2.6" stroke="#d82a2a" stroke-width="1.1"/><rect x="9" y="14" width="9" height="4.5" fill="#e8e8e8" stroke="#888" stroke-width="1"/><path d="M2 17.5 L9 9" stroke="#2a8a1a" stroke-width="3.2"/><path d="M2 17.5 L9 9" stroke="#58d038" stroke-width="1.8"/><path d="M11.5 6 l-1 6.5 l-5 -4z" fill="#48c028" stroke="#2a8a1a" stroke-width=".6"/></svg>
<svg style="left:1104px;top:68.5px" width="20" height="20" viewBox="0 0 20 20"><path d="M7 6 l6 -2.8 l6 2.6 l-6 3.2z" fill="#e8ecf6" stroke="#a8b0c4" stroke-width=".6"/><path d="M13 6.5 V1" stroke="#2a6ad8" stroke-width="1.1"/><path d="M13 6.5 l4 -2" stroke="#38b028" stroke-width="1.1"/><path d="M13 6.5 l4 2.6" stroke="#d82a2a" stroke-width="1.1"/><path d="M1.5 9.5 l4 -3 v2 l6 5 -2 2.4 -6 -5 -2 1.6z" fill="#48c028" stroke="#2a8a1a" stroke-width=".6"/><path d="M12 19 l-4 .4 .8 -2 -5 -4.4 2 -2.2 5 4.4 1.6 -1.2z" fill="#48c028" stroke="#2a8a1a" stroke-width=".6"/></svg>
<div class="glabel" style="left:1088.5px">工作平面</div>
<div class="grip" style="left:1137px;top:66px;height:41px"></div>
<svg style="left:1147px;top:68.5px" width="20" height="20" viewBox="0 0 20 20"><rect x="0.5" y="0.8" width="6.2" height="6" fill="#18c8f0"/><rect x="7" y="0.8" width="6.2" height="6" fill="#f0d800"/><rect x="13.5" y="0.8" width="6.2" height="6" fill="#18d818"/><rect x="0.5" y="7.2" width="6.2" height="6" fill="#f08000"/><rect x="7" y="7.2" width="6.2" height="6" fill="#a87018"/><rect x="13.5" y="7.2" width="6.2" height="6" fill="#f018d8"/><rect x="0.5" y="13.6" width="6.2" height="6" fill="#1818e0"/><rect x="7" y="13.6" width="6.2" height="6" fill="#18a018"/><rect x="13.5" y="13.6" width="6.2" height="6" fill="#888"/></svg>
<svg style="left:1173px;top:68.5px" width="20" height="20" viewBox="0 0 20 20"><rect x="3" y="1" width="14" height="18" fill="#f4f6fc" stroke="#6a82b4" stroke-width="1"/><rect x="5" y="3" width="10" height="1.6" fill="#f0c040"/><rect x="5" y="5.6" width="10" height="1.2" fill="#b8c8e8"/><rect x="5.2" y="8.4" width="2.8" height="2.6" fill="#18c8f0"/><rect x="8.5" y="8.4" width="2.8" height="2.6" fill="#f0d800"/><rect x="11.8" y="8.4" width="2.8" height="2.6" fill="#18d818"/><rect x="5.2" y="11.6" width="2.8" height="2.6" fill="#f08000"/><rect x="8.5" y="11.6" width="2.8" height="2.6" fill="#d82a2a"/><rect x="11.8" y="11.6" width="2.8" height="2.6" fill="#f018d8"/><rect x="5.2" y="14.8" width="2.8" height="2.6" fill="#1818e0"/><rect x="8.5" y="14.8" width="2.8" height="2.6" fill="#18a018"/><rect x="11.8" y="14.8" width="2.8" height="2.6" fill="#888"/></svg>
<svg style="left:1199px;top:68.5px" width="20" height="20" viewBox="0 0 20 20"><circle cx="10" cy="10" r="9.4" fill="#6a9a3a" stroke="#8a8a8a" stroke-width="1.2"/><g transform="translate(10 10) scale(1.15)"><path d="M-6 5.5 L2 -2.5" stroke="#e4e8ee" stroke-width="2.4" stroke-linecap="round"/><circle cx="3.5" cy="-4" r="2.6" fill="none" stroke="#e4e8ee" stroke-width="1.8" stroke-dasharray="11 5" transform="rotate(-20 3.5 -4)"/><path d="M5.5 5.5 L-1 -1" stroke="#9cc0ee" stroke-width="2.2" stroke-linecap="round"/><path d="M-1 -1 L-5 -5.5" stroke="#c9ced6" stroke-width="1.5" stroke-linecap="round"/></g></svg>
<svg style="left:1225px;top:68.5px" width="20" height="20" viewBox="0 0 20 20"><rect x="1" y="1" width="18" height="18" fill="#eef2fa" stroke="#5a78b0" stroke-width="1"/><rect x="1.5" y="1.5" width="17" height="3" fill="#3a68c0"/><path d="M3.5 6.5h13" stroke="#d8a020" stroke-width="1.6" stroke-dasharray="1.6 1"/><path d="M3.8 8.5v9" stroke="#a85a20" stroke-width="1.6" stroke-dasharray="1.6 1"/><g transform="translate(11.5 12.5) scale(0.95)"><path d="M-6 5.5 L2 -2.5" stroke="#c8ced8" stroke-width="2.4" stroke-linecap="round"/><circle cx="3.5" cy="-4" r="2.6" fill="none" stroke="#c8ced8" stroke-width="1.8" stroke-dasharray="11 5" transform="rotate(-20 3.5 -4)"/><path d="M5.5 5.5 L-1 -1" stroke="#5b8fd0" stroke-width="2.2" stroke-linecap="round"/><path d="M-1 -1 L-5 -5.5" stroke="#c9ced6" stroke-width="1.5" stroke-linecap="round"/></g></svg>
<svg style="left:1251px;top:68.5px" width="20" height="20" viewBox="0 0 20 20"><rect x="2" y="4.5" width="15" height="13" fill="none" stroke="#1a2a5a" stroke-width="1.3" stroke-dasharray="1.5 1.5"/><path d="M8 7 q4 -6 10 -2.5 l-1.5 4.5 l-6 2.5z" fill="#f0c088" stroke="#b07838" stroke-width=".6"/><path d="M4 12.5h4M6 10.5v4" stroke="#e8c800" stroke-width="1.6"/><circle cx="6" cy="12.5" r="2.4" fill="none" stroke="#3a68c0" stroke-width=".8"/></svg>
<svg style="left:1277px;top:68.5px" width="20" height="20" viewBox="0 0 20 20"><path d="M5.5 4 L18.5 2.5 L14.5 16 L1.5 17.5Z" fill="#4a70d8" stroke="#2a48a8" stroke-width="1"/><path d="M2.5 18.5 L15 17" stroke="#555" stroke-width="1" opacity=".5"/><path d="M9.8 3.5 L5.8 17 M14.2 3 L10.2 16.5 M4.6 8 L17.4 6.5 M3.2 12.5 L16 11" stroke="#e04848" stroke-width=".9"/></svg>
<div class="glabel" style="left:1222.5px">系统</div>
<div class="grip" style="left:1311px;top:66px;height:41px;opacity:0"></div>
<div id="left" class="abs"></div>
<div class="hgrip" style="left:3px;top:122px;width:54px"></div><div class="hgrip" style="left:3px;top:374px;width:54px"></div>
<svg style="left:7.5px;top:133.5px" width="20" height="20" viewBox="0 0 20 20"><ellipse cx="12" cy="17.5" rx="6" ry="1.3" fill="#000" opacity=".18"/><circle cx="7.5" cy="7" r="4.6" fill="url(#gLens)" stroke="#c0c8d4" stroke-width="1.3"/><path d="M7.5 13.5 l-5 5" stroke="#b8b8b8" stroke-width="2.4" stroke-linecap="round"/><circle cx="11.5" cy="8.5" r="5.2" fill="url(#gLens)" stroke="#aab4c4" stroke-width="1.3"/></svg>
<svg style="left:33.5px;top:133.5px" width="20" height="20" viewBox="0 0 20 20"><path d="M3 2 L16 17 M3 6 L9 13 M13 1.5 L8 9" stroke="#3a78e0" stroke-width="1.6" stroke-dasharray="3 1.4" fill="none"/><ellipse cx="8.5" cy="17.7" rx="5" ry="1.3" fill="#000" opacity=".25"/><path d="M4.5 16.5 L8.40439 14.5906 L17.1473 4.5026 L14.578 2.27584 L5.83505 12.3639 Z" fill="#e8b048" stroke="#7a4a10" stroke-width=".5"/><path d="M4.5 16.5 L8.40439 14.5906 L5.83505 12.3639 Z" fill="#f0dcb0"/><path d="M4.5 16.5 L6.06176 15.7363 L5.03402 14.8455 Z" fill="#333"/><path d="M17.1473 4.5026 L18.7847 2.61338 L16.2153 0.386618 L14.578 2.27584 Z" fill="#d83030" stroke="#7a1a1a" stroke-width=".4"/><path d="M7.11972 13.4772 L15.8627 3.38922" stroke="#a86a18" stroke-width=".7"/><path d="M14.6 0.2 h5.4 l-2.7 2.8z" fill="#000"/></svg>
<svg style="left:7.5px;top:159.5px" width="20" height="20" viewBox="0 0 20 20"><rect x="4" y="4.5" width="12.5" height="10.5" fill="url(#gDoc)" stroke="#8a8a8a" stroke-width="1.2"/><path d="M0.5 1l4.2 0l-1.4 1.4l1.9 1.9l-1.4 1.4l-1.9 -1.9l-1.4 1.4z" fill="#38b028"/><path d="M19.5 1l-4.2 0l1.4 1.4l-1.9 1.9l1.4 1.4l1.9 -1.9l1.4 1.4z" fill="#38b028"/><path d="M0.5 18.5l4.2 0l-1.4 -1.4l1.9 -1.9l-1.4 -1.4l-1.9 1.9l-1.4 -1.4z" fill="#38b028"/><path d="M19.5 18.5l-4.2 0l1.4 -1.4l-1.9 -1.9l1.4 -1.4l1.9 1.9l1.4 -1.4z" fill="#38b028"/></svg>
<svg style="left:33.5px;top:159.5px" width="20" height="20" viewBox="0 0 20 20"><circle cx="6" cy="7.5" r="4.6" fill="none" stroke="#3a78e0" stroke-width="1.5"/><ellipse cx="14" cy="14" rx="4.8" ry="4" fill="none" stroke="#3a78e0" stroke-width="1.5"/><ellipse cx="8.5" cy="17.7" rx="5" ry="1.3" fill="#000" opacity=".25"/><path d="M4.5 16.5 L8.40439 14.5906 L17.1473 4.5026 L14.578 2.27584 L5.83505 12.3639 Z" fill="#e8b048" stroke="#7a4a10" stroke-width=".5"/><path d="M4.5 16.5 L8.40439 14.5906 L5.83505 12.3639 Z" fill="#f0dcb0"/><path d="M4.5 16.5 L6.06176 15.7363 L5.03402 14.8455 Z" fill="#333"/><path d="M17.1473 4.5026 L18.7847 2.61338 L16.2153 0.386618 L14.578 2.27584 Z" fill="#d83030" stroke="#7a1a1a" stroke-width=".4"/><path d="M7.11972 13.4772 L15.8627 3.38922" stroke="#a86a18" stroke-width=".7"/><path d="M14.6 0.2 h5.4 l-2.7 2.8z" fill="#000"/></svg>
<svg style="left:7.5px;top:185.5px" width="20" height="20" viewBox="0 0 20 20"><path d="M0.5 3h4.4M2.7 0.8v4.4M0.5 7h4.4" stroke="#000" stroke-width="1"/><path d="M11 12.5 l3.5 -1.5 l4.5 1 v5.5 l-3.5 2 l-4.5 -1.2z" fill="url(#gCube)" stroke="#444" stroke-width=".5"/><path d="M7 12.5 l-5.5 5.5" stroke="#b0b0b0" stroke-width="2.4" stroke-linecap="round"/><circle cx="11" cy="8" r="5.6" fill="url(#gLens)" stroke="#9aa6b8" stroke-width="1.3"/><path d="M9.3 5.3 l4 2.7 l-4 2.7z" fill="#c0cce0" stroke="#7a8aa8" stroke-width=".5"/><path d="M14.6 0.2 h5.4 l-2.7 2.8z" fill="#000"/></svg>
<svg style="left:33.5px;top:185.5px" width="20" height="20" viewBox="0 0 20 20"><path d="M2 3 h13 v4.5 h-3.5 v5 h3.5 v5 h-13z" fill="none" stroke="#f0e800" stroke-width="1.6"/><path d="M2 3 h13 v4.5 h-3.5 v5 h3.5 v5 h-13z" fill="none" stroke="#a8a000" stroke-width=".4"/><path d="M4.5 9.5 l3.2 4.5 l6 -9" stroke="#2a9a1a" stroke-width="3.4" fill="none"/><path d="M4.5 9.5 l3.2 4.5 l6 -9" stroke="#5ad83a" stroke-width="2" fill="none"/><path d="M14.6 0.2 h5.4 l-2.7 2.8z" fill="#000"/></svg>
<svg style="left:7.5px;top:211px" width="20" height="20" viewBox="0 0 20 20"><path d="M1 12 l9.5 -4.2 l8.5 3.7 l-9.5 4.7z" fill="#e8ecf6" stroke="#a8b0c4" stroke-width=".6"/><path d="M6 12.5 V3.5" stroke="#2a6ad8" stroke-width="1.7"/><path d="M6 1l-2.5 3.8h5z" fill="#2a6ad8"/><path d="M6 12.5 L14 8" stroke="#38b028" stroke-width="1.7"/><path d="M16.5 6.4l-4.2 .6l2 3.2z" fill="#38b028"/><path d="M6 12.5 L13.5 17.5" stroke="#d82a2a" stroke-width="1.7"/><path d="M16 19l-1.2 -4.2l-2.6 3z" fill="#d82a2a"/><circle cx="6" cy="12.5" r="1.8" fill="#e8e8e8" stroke="#666" stroke-width=".5"/><path d="M14.6 0.2 h5.4 l-2.7 2.8z" fill="#000"/></svg>
<svg style="left:33.5px;top:211px" width="20" height="20" viewBox="0 0 20 20"><path d="M2 14 C3 -2 8 2 9.5 10 C11 19 16 19 18 10" fill="none" stroke="#3a78e0" stroke-width="1.6"/><ellipse cx="8.5" cy="17.7" rx="5" ry="1.3" fill="#000" opacity=".25"/><path d="M4.5 16.5 L8.40439 14.5906 L17.1473 4.5026 L14.578 2.27584 L5.83505 12.3639 Z" fill="#e8b048" stroke="#7a4a10" stroke-width=".5"/><path d="M4.5 16.5 L8.40439 14.5906 L5.83505 12.3639 Z" fill="#f0dcb0"/><path d="M4.5 16.5 L6.06176 15.7363 L5.03402 14.8455 Z" fill="#333"/><path d="M17.1473 4.5026 L18.7847 2.61338 L16.2153 0.386618 L14.578 2.27584 Z" fill="#d83030" stroke="#7a1a1a" stroke-width=".4"/><path d="M7.11972 13.4772 L15.8627 3.38922" stroke="#a86a18" stroke-width=".7"/><path d="M14.6 0.2 h5.4 l-2.7 2.8z" fill="#000"/></svg>
<svg style="left:7.5px;top:237px" width="20" height="20" viewBox="0 0 20 20"><path d="M2 2.5 h9 l1.5 1.5 h-9z M2 5.2 h9 l1.5 1.5 h-9z" fill="#a8b8f0" stroke="#6a7ad0" stroke-width=".4"/><path d="M2 8 h9 l1.5 1.6 h-9z" fill="#e8e8e8" stroke="#888" stroke-width=".4"/><ellipse cx="10.5" cy="14" rx="7" ry="4.6" fill="#c8a484" stroke="#8a6040" stroke-width=".6"/><circle cx="7.5" cy="15" r="1.7" fill="#2a50e0"/><circle cx="11.5" cy="15.8" r="1.7" fill="#28b028"/><circle cx="14.2" cy="12.8" r="1.7" fill="#d83030"/><path d="M18 2.5 L10.5 11.5" stroke="#a86a30" stroke-width="1.6" stroke-linecap="round"/><path d="M11.6 10 L9 13.4" stroke="#e8e8e8" stroke-width="2"/><path d="M14.6 0.2 h5.4 l-2.7 2.8z" fill="#000"/></svg>
<svg style="left:33.5px;top:237px" width="20" height="20" viewBox="0 0 20 20"><path d="M6 4.5 L18.5 2 L14 16 L1 18.5Z" fill="url(#gBlu)" stroke="#2a58c0" stroke-width="1.2"/><path d="M12.3 3.3 L7.5 17.2 M3.6 11.2 L16.4 8.8" stroke="#e8f0fc" stroke-width="1.2"/><path d="M14.6 0.2 h5.4 l-2.7 2.8z" fill="#000"/></svg>
<svg style="left:7.5px;top:262.8px" width="20" height="20" viewBox="0 0 20 20"><path d="M3.3 10 A6.2 6.2 0 0 1 14.15 6.78" stroke="#5a94d8" stroke-width="3.4" fill="none"/><path d="M10.74 7.09 l6.2 -2.79 l-0.31 6.2 z" fill="#5a94d8"/><path d="M15.7 11 A6.2 6.2 0 0 1 4.85 14.22" stroke="#3f78c4" stroke-width="3.4" fill="none"/><path d="M8.26 13.91 l-6.2 2.79 l0.31 -6.2 z" fill="#3f78c4"/><path d="M14.6 0.2 h5.4 l-2.7 2.8z" fill="#000"/></svg>
<svg style="left:33.5px;top:262.8px" width="20" height="20" viewBox="0 0 20 20"><path d="M2.5 6.5 l7 -3.5 l8 2.5 v9.5 l-7 3.5 l-8 -2.5z" fill="#8a8a8a" stroke="#444" stroke-width=".7"/><path d="M2.5 6.5 l7 -3.5 l8 2.5 l-7 3.5z" fill="#d4d4d4" stroke="#444" stroke-width=".6"/><path d="M10.5 9 v9.5 l7 -3.5 v-9.5z" fill="#5e5e5e" stroke="#444" stroke-width=".6"/><path d="M14.6 0.2 h5.4 l-2.7 2.8z" fill="#000"/></svg>
<svg style="left:7.5px;top:288.5px" width="20" height="20" viewBox="0 0 20 20"><ellipse cx="10" cy="18.6" rx="4.5" ry="1" fill="#000" opacity=".18"/><text x="10" y="15.5" font-size="19" font-weight="bold" text-anchor="middle" fill="#3f74cc" stroke="#2a4a9a" stroke-width=".4" font-family="Liberation Sans,sans-serif">?</text><path d="M14.6 0.2 h5.4 l-2.7 2.8z" fill="#000"/></svg>
<svg style="left:33.5px;top:288.5px" width="20" height="20" viewBox="0 0 20 20"><path d="M3 3.5 v15 M17 3.5 v15" stroke="#222" stroke-width="1.3"/><path d="M4 6.5 h12" stroke="#e8d800" stroke-width="1.8"/><path d="M3.6 6.5 l3.4 -2.2 v4.4z M17.4 6.5 l-3.4 -2.2 v4.4z" fill="#e8d800" stroke="#8a8000" stroke-width=".4"/><path d="M14.6 0.2 h5.4 l-2.7 2.8z" fill="#000"/></svg>
<svg style="left:7.5px;top:314.5px" width="20" height="20" viewBox="0 0 20 20"><path d="M3.5 5 h13 l-1.8 13.5 h-9.4z" fill="#c4d8ec" stroke="#5a7a9a" stroke-width=".8"/><ellipse cx="10" cy="5" rx="6.6" ry="1.8" fill="#e4eef8" stroke="#5a7a9a" stroke-width=".8"/><path d="M7 9 l2 6 M13 9 l-2 6 M10 8.5 v7" stroke="#6ab848" stroke-width="1"/><path d="M8 3.5 l2 -2.5 l2 2.5z" fill="#e8d020"/><path d="M14.6 0.2 h5.4 l-2.7 2.8z" fill="#000"/></svg>
<svg style="left:33.5px;top:314.5px" width="20" height="20" viewBox="0 0 20 20"><ellipse cx="10" cy="18.3" rx="6" ry="1.2" fill="#000" opacity=".15"/><path d="M2 8 L8.5 2 V5.5 C14 5.5 17.5 9 16 15 C15.5 17 14 18 13 18 C14.5 15 13 11 8.5 11 V14 Z" fill="url(#gGry)" stroke="#8c8c8c" stroke-width=".6"/><path d="M14.6 0.2 h5.4 l-2.7 2.8z" fill="#000"/></svg>
<svg style="left:7.5px;top:341px" width="20" height="20" viewBox="0 0 20 20"><path d="M2 1.5 v17" stroke="#444" stroke-width="1.4"/><circle cx="10.5" cy="9" r="5" fill="none" stroke="#e07818" stroke-width="1.6"/><path d="M10.5 1.5 v15 M3 9 h15 M5.2 3.7 l10.6 10.6 M15.8 3.7 l-10.6 10.6" stroke="#e07818" stroke-width="1"/><circle cx="10.5" cy="9" r="1.6" fill="#f0a040"/><path d="M2 14.5 l3 -1 l11 0 l-3 5 l-11 .5z" fill="#f08a28" opacity=".9"/><path d="M5 14 l-1.5 5 M8.5 13.8 l-1.5 5 M12 13.8 l-1.5 5" stroke="#fff" stroke-width=".7"/><path d="M14.6 0.2 h5.4 l-2.7 2.8z" fill="#000"/></svg>
<svg style="left:33.5px;top:341px" width="20" height="20" viewBox="0 0 20 20"><path d="M2 3.5 h5 l1.5 1.5 h7 v8 h-13.5z" fill="#e9bd4c" stroke="#b8862a" stroke-width=".6"/><path d="M5 2 h7 v5 h-7z" fill="#38b028"/><path d="M2 13 l2.5 -6.5 h13 l-2.5 6.5z" fill="url(#gFold)" stroke="#b8862a" stroke-width=".6"/><path d="M4 12.5 h11 l3.5 3.5 v3 h-14.5z" fill="#f4f6fc" stroke="#333" stroke-width=".9"/></svg>
<div id="vp" class="abs"></div>
<svg class="abs" style="left:60px;top:109px" width="1860" height="891" viewBox="60 109 1860 891"><defs><linearGradient id="g1" gradientUnits="userSpaceOnUse" x1="627.5" y1="295.5" x2="600.796" y2="360.211"><stop offset="0" stop-color="#c4c4c4"/><stop offset="0.04" stop-color="#c4c4c4"/><stop offset="0.04" stop-color="#303030"/><stop offset="0.055" stop-color="#303030"/><stop offset="0.055" stop-color="#efefef"/><stop offset="0.08" stop-color="#efefef"/><stop offset="0.08" stop-color="#141414"/><stop offset="0.173" stop-color="#1e1e1e"/><stop offset="0.173" stop-color="#f0f0f0"/><stop offset="0.213" stop-color="#f0f0f0"/><stop offset="0.213" stop-color="#303030"/><stop offset="0.228" stop-color="#303030"/><stop offset="0.228" stop-color="#ededed"/><stop offset="0.252" stop-color="#ededed"/><stop offset="0.252" stop-color="#303030"/><stop offset="0.283" stop-color="#303030"/><stop offset="0.283" stop-color="#a2a2a2"/><stop offset="0.315" stop-color="#a2a2a2"/><stop offset="0.315" stop-color="#303030"/><stop offset="0.346" stop-color="#303030"/><stop offset="0.346" stop-color="#c6c6c6"/><stop offset="0.417" stop-color="#959595"/><stop offset="0.417" stop-color="#303030"/><stop offset="0.433" stop-color="#303030"/><stop offset="0.433" stop-color="#f2f2f2"/><stop offset="0.488" stop-color="#f2f2f2"/><stop offset="0.488" stop-color="#303030"/><stop offset="0.504" stop-color="#303030"/><stop offset="0.504" stop-color="#ececec"/><stop offset="0.528" stop-color="#ececec"/><stop offset="0.528" stop-color="#303030"/><stop offset="0.559" stop-color="#303030"/><stop offset="0.559" stop-color="#a8a8a8"/><stop offset="0.59" stop-color="#a8a8a8"/><stop offset="0.59" stop-color="#303030"/><stop offset="0.614" stop-color="#303030"/><stop offset="0.614" stop-color="#8e8e8e"/><stop offset="0.717" stop-color="#c8c8c8"/><stop offset="0.717" stop-color="#303030"/><stop offset="0.748" stop-color="#303030"/><stop offset="0.748" stop-color="#a6a6a6"/><stop offset="0.78" stop-color="#a6a6a6"/><stop offset="0.78" stop-color="#303030"/><stop offset="0.811" stop-color="#303030"/><stop offset="0.811" stop-color="#f0f0f0"/><stop offset="0.866" stop-color="#f0f0f0"/><stop offset="0.866" stop-color="#303030"/><stop offset="0.882" stop-color="#303030"/><stop offset="0.882" stop-color="#e2e2e2"/><stop offset="0.906" stop-color="#e2e2e2"/><stop offset="0.906" stop-color="#303030"/><stop offset="0.937" stop-color="#303030"/><stop offset="0.937" stop-color="#a4a4a4"/><stop offset="0.984" stop-color="#a4a4a4"/><stop offset="0.984" stop-color="#303030"/><stop offset="1" stop-color="#303030"/></linearGradient><linearGradient id="g2" x1="0" y1="0" x2="1" y2="0"><stop offset="0" stop-color="#5a5a5a"/><stop offset="0.5" stop-color="#8c8c8c"/><stop offset="1" stop-color="#c8c8c8"/></linearGradient><linearGradient id="g3" gradientUnits="userSpaceOnUse" x1="1176" y1="562" x2="1172.62" y2="570.686"><stop offset="0" stop-color="#8c8c8c"/><stop offset="0.35" stop-color="#f4f4f4"/><stop offset="0.7" stop-color="#c8c8c8"/><stop offset="1" stop-color="#9b9b9b"/></linearGradient><linearGradient id="g4" gradientUnits="userSpaceOnUse" x1="1063.75" y1="560.5" x2="1058.77" y2="573.87"><stop offset="0" stop-color="#8c8c8c"/><stop offset="0.25" stop-color="#f6f6f6"/><stop offset="0.5" stop-color="#e8e8e8"/><stop offset="1" stop-color="#a0a0a0"/></linearGradient><linearGradient id="g5" gradientUnits="userSpaceOnUse" x1="1116" y1="700.5" x2="1113.55" y2="706.504"><stop offset="0" stop-color="#a9a9a9"/><stop offset="0.35" stop-color="#d8d8d8"/><stop offset="0.7" stop-color="#8a8a8a"/><stop offset="1" stop-color="#3c3c3c"/></linearGradient><linearGradient id="g6" x1="0" y1="0" x2="1" y2="0"><stop offset="0" stop-color="#5a5a5a"/><stop offset="0.5" stop-color="#9a9a9a"/><stop offset="1" stop-color="#d4d4d4"/></linearGradient><linearGradient id="g7" gradientUnits="userSpaceOnUse" x1="1020.5" y1="442.2" x2="1013.94" y2="458.772"><stop offset="0" stop-color="#9c9c9c"/><stop offset="0.05" stop-color="#bcbcbc"/><stop offset="0.24" stop-color="#f8f8f8"/><stop offset="0.36" stop-color="#ececec"/><stop offset="0.7" stop-color="#a4a4a4"/><stop offset="0.93" stop-color="#7e7e7e"/><stop offset="1" stop-color="#4c4c4c"/></linearGradient><linearGradient id="g8" gradientUnits="userSpaceOnUse" x1="923.5" y1="426.3" x2="919.882" y2="434.234"><stop offset="0" stop-color="#9c9c9c"/><stop offset="0.05" stop-color="#bcbcbc"/><stop offset="0.24" stop-color="#f8f8f8"/><stop offset="0.36" stop-color="#ececec"/><stop offset="0.7" stop-color="#a4a4a4"/><stop offset="0.93" stop-color="#7e7e7e"/><stop offset="1" stop-color="#4c4c4c"/></linearGradient><linearGradient id="g9" gradientUnits="userSpaceOnUse" x1="995.5" y1="474" x2="988.354" y2="491.533"><stop offset="0" stop-color="#9c9c9c"/><stop offset="0.05" stop-color="#bcbcbc"/><stop offset="0.24" stop-color="#f8f8f8"/><stop offset="0.36" stop-color="#ececec"/><stop offset="0.7" stop-color="#a4a4a4"/><stop offset="0.93" stop-color="#7e7e7e"/><stop offset="1" stop-color="#4c4c4c"/></linearGradient><linearGradient id="g10" gradientUnits="userSpaceOnUse" x1="986.875" y1="486.075" x2="980.084" y2="502.308"><stop offset="0" stop-color="#9c9c9c"/><stop offset="0.05" stop-color="#bcbcbc"/><stop offset="0.24" stop-color="#f8f8f8"/><stop offset="0.36" stop-color="#ececec"/><stop offset="0.7" stop-color="#a4a4a4"/><stop offset="0.93" stop-color="#7e7e7e"/><stop offset="1" stop-color="#4c4c4c"/></linearGradient><linearGradient id="g11" x1="0" y1="0" x2="1" y2="0"><stop offset="0" stop-color="#4e4e4e"/><stop offset="0.45" stop-color="#8e8e8e"/><stop offset="1" stop-color="#d0d0d0"/></linearGradient><linearGradient id="g12" gradientUnits="userSpaceOnUse" x1="1312.5" y1="647" x2="1307.7" y2="657.883"><stop offset="0" stop-color="#9a9a9a"/><stop offset="0.3" stop-color="#f2f2f2"/><stop offset="0.6" stop-color="#d0d0d0"/><stop offset="0.8" stop-color="#555"/><stop offset="1" stop-color="#333"/></linearGradient><linearGradient id="g13" gradientUnits="userSpaceOnUse" x1="1392" y1="562" x2="1418" y2="568"><stop offset="0" stop-color="#8a8a8a"/><stop offset="0.3" stop-color="#c6c6c6"/><stop offset="0.65" stop-color="#a4a4a4"/><stop offset="1" stop-color="#6c6c6c"/></linearGradient><linearGradient id="g14" gradientUnits="userSpaceOnUse" x1="1362.5" y1="640.5" x2="1357.4" y2="655.8"><stop offset="0" stop-color="#9c9c9c"/><stop offset="0.05" stop-color="#bcbcbc"/><stop offset="0.24" stop-color="#f8f8f8"/><stop offset="0.36" stop-color="#ececec"/><stop offset="0.7" stop-color="#a4a4a4"/><stop offset="0.93" stop-color="#7e7e7e"/><stop offset="1" stop-color="#4c4c4c"/></linearGradient><linearGradient id="g15" gradientUnits="userSpaceOnUse" x1="1171.5" y1="497" x2="1169" y2="503.816"><stop offset="0" stop-color="#888"/><stop offset="0.3" stop-color="#f0f0f0"/><stop offset="0.6" stop-color="#b0b0b0"/><stop offset="1" stop-color="#9e9e9e"/></linearGradient><linearGradient id="g16" gradientUnits="userSpaceOnUse" x1="1123" y1="496" x2="1147" y2="538"><stop offset="0" stop-color="#909090"/><stop offset="0.2" stop-color="#787878"/><stop offset="0.6" stop-color="#505050"/><stop offset="1" stop-color="#363636"/></linearGradient><linearGradient id="g17" gradientUnits="userSpaceOnUse" x1="1169" y1="515" x2="1193" y2="557"><stop offset="0" stop-color="#909090"/><stop offset="0.2" stop-color="#787878"/><stop offset="0.6" stop-color="#505050"/><stop offset="1" stop-color="#363636"/></linearGradient><linearGradient id="g18" gradientUnits="userSpaceOnUse" x1="1240" y1="430" x2="1296" y2="462"><stop offset="0" stop-color="#a8a8a8"/><stop offset="0.8" stop-color="#a8a8a8"/><stop offset="0.93" stop-color="#8a8a8a"/><stop offset="1" stop-color="#666"/></linearGradient><linearGradient id="g19" gradientUnits="userSpaceOnUse" x1="1099" y1="391.25" x2="1095.39" y2="400"><stop offset="0" stop-color="#9c9c9c"/><stop offset="0.05" stop-color="#bcbcbc"/><stop offset="0.24" stop-color="#f8f8f8"/><stop offset="0.36" stop-color="#ececec"/><stop offset="0.7" stop-color="#a4a4a4"/><stop offset="0.93" stop-color="#7e7e7e"/><stop offset="1" stop-color="#4c4c4c"/></linearGradient><linearGradient id="g20" gradientUnits="userSpaceOnUse" x1="1047" y1="392" x2="1056" y2="396"><stop offset="0" stop-color="#6a6a6a"/><stop offset="0.35" stop-color="#f2f2f2"/><stop offset="0.7" stop-color="#b0b0b0"/><stop offset="1" stop-color="#707070"/></linearGradient><linearGradient id="g21" gradientUnits="userSpaceOnUse" x1="1052" y1="376" x2="1063" y2="386"><stop offset="0" stop-color="#8a8a8a"/><stop offset="0.4" stop-color="#f4f4f4"/><stop offset="1" stop-color="#8a8a8a"/></linearGradient><linearGradient id="g22" gradientUnits="userSpaceOnUse" x1="1160" y1="316" x2="1170" y2="320"><stop offset="0" stop-color="#777"/><stop offset="0.35" stop-color="#f0f0f0"/><stop offset="1" stop-color="#8a8a8a"/></linearGradient><linearGradient id="g23" gradientUnits="userSpaceOnUse" x1="1168.25" y1="304.5" x2="1163.46" y2="316.176"><stop offset="0" stop-color="#9c9c9c"/><stop offset="0.05" stop-color="#bcbcbc"/><stop offset="0.24" stop-color="#f8f8f8"/><stop offset="0.36" stop-color="#ececec"/><stop offset="0.7" stop-color="#a4a4a4"/><stop offset="0.93" stop-color="#7e7e7e"/><stop offset="1" stop-color="#4c4c4c"/></linearGradient><linearGradient id="g24" gradientUnits="userSpaceOnUse" x1="1205" y1="275" x2="1216" y2="300"><stop offset="0" stop-color="#b4b4b4"/><stop offset="0.5" stop-color="#6e6e6e"/><stop offset="1" stop-color="#484848"/></linearGradient><linearGradient id="g25" gradientUnits="userSpaceOnUse" x1="1154.5" y1="399" x2="1160.5" y2="405"><stop offset="0" stop-color="#555"/><stop offset="1" stop-color="#bbb"/></linearGradient><linearGradient id="g26" gradientUnits="userSpaceOnUse" x1="1152" y1="408" x2="1158" y2="414"><stop offset="0" stop-color="#555"/><stop offset="1" stop-color="#bbb"/></linearGradient><linearGradient id="g27" gradientUnits="userSpaceOnUse" x1="1149.5" y1="416" x2="1155.5" y2="422"><stop offset="0" stop-color="#555"/><stop offset="1" stop-color="#bbb"/></linearGradient><linearGradient id="g28" gradientUnits="userSpaceOnUse" x1="1199" y1="418.5" x2="1205" y2="424.5"><stop offset="0" stop-color="#555"/><stop offset="1" stop-color="#bbb"/></linearGradient><linearGradient id="g29" gradientUnits="userSpaceOnUse" x1="1197" y1="427" x2="1203" y2="433"><stop offset="0" stop-color="#555"/><stop offset="1" stop-color="#bbb"/></linearGradient><linearGradient id="g30" gradientUnits="userSpaceOnUse" x1="1195" y1="435.5" x2="1201" y2="441.5"><stop offset="0" stop-color="#555"/><stop offset="1" stop-color="#bbb"/></linearGradient></defs><polygon points="428.8,213 822.5,377.5 811,386.5 800.4,402.5 792.6,436 397.5,277 405,235 413,225" fill="url(#g1)" stroke="#111" stroke-width="0.8" stroke-linejoin="round" />
<polygon points="606,292 614,288 625,292 626,300 617,305 606,300" fill="#a2a2a2" stroke="#111" stroke-width="0.7" stroke-linejoin="round" />
<polyline points="606,292 616,296 625,292" fill="none" stroke="#111" stroke-width="0.6" stroke-linecap="round" stroke-linejoin="round" />
<polyline points="616,296 617,305" fill="none" stroke="#111" stroke-width="0.6" stroke-linecap="round" stroke-linejoin="round" />
<polygon points="398.8,200.6 428.8,213 413,225 381.5,212.5" fill="#a2a2a2" stroke="#111" stroke-width="0.9" stroke-linejoin="round" />
<polyline points="400.5,199.5 430,211.8" fill="none" stroke="#111" stroke-width="0.6" stroke-linecap="round" stroke-linejoin="round" />
<polygon points="381.5,212.5 413,225 405,235 373.8,227.5" fill="#acacac" stroke="#111" stroke-width="0.8" stroke-linejoin="round" />
<polyline points="379.6,216.2 411,227.5" fill="none" stroke="#333" stroke-width="0.5" stroke-linecap="round" stroke-linejoin="round" />
<polyline points="378,219.2 409.4,229.5" fill="none" stroke="#333" stroke-width="0.5" stroke-linecap="round" stroke-linejoin="round" />
<polyline points="376.5,222.2 407.8,231.5" fill="none" stroke="#333" stroke-width="0.5" stroke-linecap="round" stroke-linejoin="round" />
<polyline points="374.9,225.2 406.2,233.5" fill="none" stroke="#333" stroke-width="0.5" stroke-linecap="round" stroke-linejoin="round" />
<polygon points="373.8,227.5 405,235 397.5,277 366,261.5" fill="#a8a8a8" stroke="#111" stroke-width="0.9" stroke-linejoin="round" />
<polyline points="367,257.5 398.5,272.5" fill="none" stroke="#333" stroke-width="0.5" stroke-linecap="round" stroke-linejoin="round" />
<ellipse cx="386.25" cy="253.75" rx="11" ry="11.8" fill="#ababab" stroke="#111" stroke-width="0.9" transform="rotate(-15 386.25 253.75)"/>
<ellipse cx="386.75" cy="254" rx="5.4" ry="6" fill="url(#g2)" stroke="#111" stroke-width="0.9" transform="rotate(-15 386.75 254)"/>
<path d="M384.5 249.5 a4 5 -15 0 0 5 8" fill="none" stroke="#222" stroke-width="0.6" stroke-linejoin="round" stroke-linecap="round" />
<polygon points="822.5,377.5 878,397 862,409.5 811,386.5" fill="#9e9e9e" stroke="#111" stroke-width="0.9" stroke-linejoin="round" />
<polyline points="824.5,375.8 879,395.2" fill="none" stroke="#111" stroke-width="0.6" stroke-linecap="round" stroke-linejoin="round" />
<polyline points="853,391 839.3,400" fill="none" stroke="#111" stroke-width="0.6" stroke-linecap="round" stroke-linejoin="round" />
<polygon points="811,386.5 862,409.5 845,423 841.4,418.2 832,414 800.4,402.5" fill="#a8a8a8" stroke="#111" stroke-width="0.8" stroke-linejoin="round" />
<polyline points="808.9,389.7 834.4,400.8 858.2,411.7" fill="none" stroke="#333" stroke-width="0.5" stroke-linecap="round" stroke-linejoin="round" />
<polyline points="806.8,392.9 832.8,403.6 854.4,413.9" fill="none" stroke="#333" stroke-width="0.5" stroke-linecap="round" stroke-linejoin="round" />
<polyline points="804.6,396.1 831.2,406.4 850.6,416.1" fill="none" stroke="#333" stroke-width="0.5" stroke-linecap="round" stroke-linejoin="round" />
<polyline points="802.5,399.3 829.6,409.2 846.8,418.3" fill="none" stroke="#333" stroke-width="0.5" stroke-linecap="round" stroke-linejoin="round" />
<polygon points="800.4,402.5 832,414 824.6,444.5 792.6,434" fill="#a8a8a8" stroke="#111" stroke-width="0.9" stroke-linejoin="round" />
<polygon points="832,414 843,419 836,449.7 824.6,444.5" fill="#a2a2a2" stroke="#111" stroke-width="0.9" stroke-linejoin="round" />
<polyline points="793.5,430.5 825.5,441 835,445" fill="none" stroke="#333" stroke-width="0.5" stroke-linecap="round" stroke-linejoin="round" />
<ellipse cx="813" cy="417" rx="10.5" ry="11.6" fill="#ababab" stroke="#111" stroke-width="0.9" transform="rotate(-15 813 417)"/>
<ellipse cx="813.5" cy="417.3" rx="5.2" ry="5.8" fill="url(#g2)" stroke="#111" stroke-width="0.9" transform="rotate(-15 813.5 417.3)"/>
<path d="M811.3 413 a4 5 -15 0 0 5 8" fill="none" stroke="#222" stroke-width="0.6" stroke-linejoin="round" stroke-linecap="round" />
<polygon points="897.5,512 950,478 1000,496 1094,527 1215,548 1215,621 917.5,510 900,512" fill="#9b9b9b" stroke="none" stroke-width="0.9" stroke-linejoin="round" />
<polygon points="1140,548 1213,576 1213,586 1140,558" fill="url(#g3)" stroke="none" stroke-width="0.9" stroke-linejoin="round" />
<polygon points="917.5,506 1215,617 1247,646 907.5,517.5" fill="url(#g4)" stroke="none" stroke-width="0.9" stroke-linejoin="round" />
<polygon points="842.5,500 897.5,519 907.5,517.5 1247,646 1425,739 1407,826 825,589" fill="#a9a9a9" stroke="#111" stroke-width="0.8" stroke-linejoin="round" />
<polygon points="825,581 1409,818 1407,826 825,589" fill="url(#g5)" stroke="none" stroke-width="0.9" stroke-linejoin="round" />
<polyline points="825,589 1407,826" fill="none" stroke="#111" stroke-width="0.9" stroke-linecap="round" stroke-linejoin="round" />
<polygon points="837.5,499 842.5,500 825,589 820,584" fill="#b4b4b4" stroke="#111" stroke-width="0.8" stroke-linejoin="round" />
<polygon points="806,476 883.5,423 975,452 897.5,505" fill="#a8a8a8" stroke="#111" stroke-width="0.9" stroke-linejoin="round" />
<polygon points="806,476 897.5,505 897.5,519 805,483" fill="#a2a2a2" stroke="#111" stroke-width="0.9" stroke-linejoin="round" />
<polygon points="897.5,505 975,452 974,463 897.5,519" fill="#5e5e5e" stroke="#111" stroke-width="0.9" stroke-linejoin="round" />
<polygon points="865,430 939,379 930,430 852.5,485" fill="#5c5c5c" stroke="#111" stroke-width="0.9" stroke-linejoin="round" />
<polygon points="842.5,420 865,430 852.5,485 830,475" fill="#b2b2b2" stroke="#111" stroke-width="0.9" stroke-linejoin="round" />
<polygon points="916,370 939,379 865,430 842.5,420" fill="#a9a9a9" stroke="#111" stroke-width="0.9" stroke-linejoin="round" />
<polygon points="900,381 910,385 904,390 900,388 895,391 889,389" fill="#9a9a9a" stroke="#111" stroke-width="0.7" stroke-linejoin="round" />
<ellipse cx="924" cy="377" rx="8.6" ry="4.3" fill="url(#g6)" stroke="#111" stroke-width="0.9" transform="rotate(10 924 377)"/>
<ellipse cx="856.5" cy="423.8" rx="8.6" ry="4.3" fill="url(#g6)" stroke="#111" stroke-width="0.9" transform="rotate(10 856.5 423.8)"/>
<ellipse cx="918" cy="400" rx="2" ry="3" fill="#ddd" stroke="#111" stroke-width="0.6"/>
<polygon points="925,404.4 1116,480 1110,500.5 917.5,420.6" fill="url(#g7)" stroke="none" stroke-width="0.6" stroke-linejoin="round" />
<ellipse cx="921" cy="412.5" rx="4.2" ry="8.6" fill="#c0c0c0" stroke="none" stroke-width="0.9" transform="rotate(18 921 412.5)"/>
<ellipse cx="909" cy="424" rx="6" ry="12.5" fill="#c4c4c4" stroke="#111" stroke-width="0.8" transform="rotate(18 909 424)"/>
<ellipse cx="910" cy="424" rx="4.4" ry="10" fill="#e8e8e8" stroke="#111" stroke-width="0.6" transform="rotate(18 910 424)"/>
<ellipse cx="911" cy="424.5" rx="3.4" ry="8.4" fill="#6a6a6a" stroke="#111" stroke-width="0.6" transform="rotate(18 911 424.5)"/>
<ellipse cx="887" cy="436" rx="6" ry="12" fill="#c4c4c4" stroke="#111" stroke-width="0.8" transform="rotate(18 887 436)"/>
<ellipse cx="888" cy="436" rx="4.4" ry="9.6" fill="#e8e8e8" stroke="#111" stroke-width="0.6" transform="rotate(18 888 436)"/>
<ellipse cx="889" cy="436.5" rx="3.4" ry="8" fill="#6a6a6a" stroke="#111" stroke-width="0.6" transform="rotate(18 889 436.5)"/>
<polygon points="911,420.6 936,432 934,441.5 909.5,429.5" fill="url(#g8)" stroke="none" stroke-width="0.6" stroke-linejoin="round" />
<ellipse cx="940" cy="435.6" rx="6.5" ry="12.8" fill="#b0b0b0" stroke="#111" stroke-width="0.8" transform="rotate(18 940 435.6)"/>
<polygon points="937,423.5 944,426 951,450.5 943.5,448" fill="#b0b0b0" stroke="none" stroke-width="0.9" stroke-linejoin="round" />
<ellipse cx="947" cy="438" rx="6.2" ry="12.8" fill="#585858" stroke="#111" stroke-width="0.8" transform="rotate(18 947 438)"/>
<polygon points="890,431 1101,517 1097,536 884,449" fill="url(#g9)" stroke="none" stroke-width="0.6" stroke-linejoin="round" />
<polygon points="873.8,438.8 1100,533.4 1100,554.4 867,455" fill="url(#g10)" stroke="none" stroke-width="0.6" stroke-linejoin="round" />
<ellipse cx="870.5" cy="447" rx="4.2" ry="8.8" fill="#b8b8b8" stroke="#555" stroke-width="0.6" transform="rotate(18 870.5 447)"/>
<polygon points="1215,548 1465,650 1440,668 1410,715 1244,646 1215,617" fill="#a0a0a0" stroke="none" stroke-width="0.9" stroke-linejoin="round" />
<polygon points="1215,604 1250,618 1250,634 1215,619" fill="url(#g12)" stroke="none" stroke-width="0.9" stroke-linejoin="round" />
<polygon points="1249,645 1428,722 1425,739 1240,664 1242.5,650" fill="#a4a4a4" stroke="#111" stroke-width="0.8" stroke-linejoin="round" />
<polyline points="1242.5,650 1426,729" fill="none" stroke="#111" stroke-width="0.6" stroke-linecap="round" stroke-linejoin="round" />
<polyline points="1202.5,621.5 1336,673.5" fill="none" stroke="#3a3a3a" stroke-width="2" stroke-linecap="round" stroke-linejoin="round" />
<polygon points="1365,694 1410,715 1432.5,715 1507.5,662.5 1465,650 1440,668" fill="#a6a6a6" stroke="#111" stroke-width="0.8" stroke-linejoin="round" />
<polyline points="1410,715 1466,665" fill="none" stroke="#111" stroke-width="0.6" stroke-linecap="round" stroke-linejoin="round" />
<polyline points="1420,715 1484,664" fill="none" stroke="#111" stroke-width="0.6" stroke-linecap="round" stroke-linejoin="round" />
<polyline points="1388,705 1445,664" fill="none" stroke="#111" stroke-width="0.6" stroke-linecap="round" stroke-linejoin="round" />
<polygon points="1432.5,715 1507.5,662.5 1521,667.5 1446,717.5" fill="#a4a4a4" stroke="#111" stroke-width="0.8" stroke-linejoin="round" />
<polygon points="1432.5,715 1446,717.5 1410,882.5 1395,876" fill="#a2a2a2" stroke="#111" stroke-width="0.8" stroke-linejoin="round" />
<polygon points="1446,717.5 1521,667.5 1486,827.5 1410,882.5" fill="#464646" stroke="#111" stroke-width="0.8" stroke-linejoin="round" />
<ellipse cx="1443" cy="756" rx="2.6" ry="4.6" fill="#e8e8e8" stroke="#222" stroke-width="0.5" transform="rotate(20 1443 756)"/>
<ellipse cx="1431.5" cy="803" rx="2.6" ry="4.6" fill="#e8e8e8" stroke="#222" stroke-width="0.5" transform="rotate(20 1431.5 803)"/>
<ellipse cx="1421" cy="849" rx="2.6" ry="4.6" fill="#e8e8e8" stroke="#222" stroke-width="0.5" transform="rotate(20 1421 849)"/>
<ellipse cx="1496" cy="758" rx="2.6" ry="4.6" fill="#e8e8e8" stroke="#222" stroke-width="0.5" transform="rotate(20 1496 758)"/>
<ellipse cx="1485" cy="805" rx="2.6" ry="4.6" fill="#e8e8e8" stroke="#222" stroke-width="0.5" transform="rotate(20 1485 805)"/>
<ellipse cx="1507" cy="712" rx="2.6" ry="4.6" fill="#e8e8e8" stroke="#222" stroke-width="0.5" transform="rotate(20 1507 712)"/>
<polygon points="1287.5,588 1373,528 1402,550 1392,579 1369,594.5 1345,611" fill="#9a9a9a" stroke="#111" stroke-width="0.8" stroke-linejoin="round" />
<polygon points="1212,556 1300,495 1339,520 1354,511.5 1367.5,516 1292.5,564 1281,560 1277.5,583.5 1218.8,559.4" fill="#a4a4a4" stroke="#111" stroke-width="0.8" stroke-linejoin="round" />
<polyline points="1297.5,555 1354,511.5" fill="none" stroke="#111" stroke-width="0.6" stroke-linecap="round" stroke-linejoin="round" />
<polygon points="1292.5,563.8 1367.5,516.2 1373,528 1287.5,588" fill="#505050" stroke="#111" stroke-width="0.7" stroke-linejoin="round" />
<polygon points="1277.5,583.5 1281,560 1292.5,564 1287.5,588" fill="#a8a8a8" stroke="#111" stroke-width="0.7" stroke-linejoin="round" />
<polyline points="1287.5,588 1373,528" fill="none" stroke="#ff30ff" stroke-width="1.3" stroke-linecap="round" stroke-linejoin="round" />
<polygon points="1218.8,559.4 1287.5,588 1345,611 1342.5,629 1336,672 1202.5,620 1211,577" fill="#a8a8a8" stroke="#111" stroke-width="0.8" stroke-linejoin="round" />
<polyline points="1211,577 1342.5,629" fill="none" stroke="#222" stroke-width="1.6" stroke-linecap="round" stroke-linejoin="round" stroke-dasharray="1.2 1"/>
<polyline points="1211,577 1342.5,629" fill="none" stroke="#ddd" stroke-width="0.5" stroke-linecap="round" stroke-linejoin="round" />
<polyline points="1204,613.5 1337,665" fill="none" stroke="#111" stroke-width="0.5" stroke-linecap="round" stroke-linejoin="round" />
<polygon points="1345,611 1369,594.5 1364,640 1336,672" fill="#555" stroke="#111" stroke-width="0.8" stroke-linejoin="round" />
<ellipse cx="1267.5" cy="535" rx="4" ry="2.3" fill="url(#g11)" stroke="#222" stroke-width="0.6" transform="rotate(12 1267.5 535)"/>
<ellipse cx="1301.5" cy="539.5" rx="5.5" ry="3" fill="url(#g11)" stroke="#222" stroke-width="0.6" transform="rotate(12 1301.5 539.5)"/>
<ellipse cx="1284" cy="551" rx="4.5" ry="2.5" fill="url(#g11)" stroke="#222" stroke-width="0.6" transform="rotate(12 1284 551)"/>
<ellipse cx="1354" cy="561" rx="5.5" ry="3" fill="url(#g11)" stroke="#222" stroke-width="0.6" transform="rotate(12 1354 561)"/>
<ellipse cx="1338" cy="573" rx="6" ry="3.2" fill="url(#g11)" stroke="#222" stroke-width="0.6" transform="rotate(12 1338 573)"/>
<ellipse cx="1371" cy="577" rx="4.5" ry="2.4" fill="url(#g11)" stroke="#222" stroke-width="0.6" transform="rotate(12 1371 577)"/>
<ellipse cx="1293.5" cy="555" rx="5" ry="3" fill="#666" stroke="#111" stroke-width="0.6"/>
<ellipse cx="1293.5" cy="553.5" rx="3.4" ry="2.2" fill="#ccc" stroke="#111" stroke-width="0.5"/>
<ellipse cx="1293.5" cy="553" rx="1.5" ry="1" fill="#222" stroke="#111" stroke-width="0.3"/>
<polygon points="1377.5,507 1390.6,496 1386,522 1374,518" fill="#505050" stroke="#111" stroke-width="0.8" stroke-linejoin="round" />
<polygon points="1366,502.5 1380,492 1390.6,496 1377.5,507" fill="#a0a0a0" stroke="#111" stroke-width="0.7" stroke-linejoin="round" />
<polygon points="1332.5,492 1341,488 1412,541 1403,548 1346,507 1341,509.5 1334.5,502.5" fill="#8c8c8c" stroke="#111" stroke-width="0.8" stroke-linejoin="round" />
<polyline points="1336,494 1404,544" fill="none" stroke="#111" stroke-width="0.5" stroke-linecap="round" stroke-linejoin="round" />
<polyline points="1332.5,492 1334.5,502.5" fill="none" stroke="#111" stroke-width="0.5" stroke-linecap="round" stroke-linejoin="round" />
<ellipse cx="1365" cy="505" rx="2" ry="1.4" fill="#333" stroke="#111" stroke-width="0.3"/>
<polygon points="1369,595 1391,580 1426,579 1391,605" fill="#a4a4a4" stroke="#111" stroke-width="0.8" stroke-linejoin="round" />
<polygon points="1391,605 1426,579 1421,622 1383,660" fill="#5a5a5a" stroke="#111" stroke-width="0.8" stroke-linejoin="round" />
<polygon points="1369,595 1391,605 1372,704 1364,695 1350,690" fill="#a8a8a8" stroke="#111" stroke-width="0.8" stroke-linejoin="round" />
<ellipse cx="1387" cy="593" rx="5" ry="2.5" fill="url(#g11)" stroke="#111" stroke-width="0.5" transform="rotate(8 1387 593)"/>
<ellipse cx="1400" cy="584" rx="11" ry="5.5" fill="#9a9a9a" stroke="#111" stroke-width="0.7" transform="rotate(8 1400 584)"/>
<path d="M1396 548 L1418 552 L1411 581 Q1400 586 1389 579 Z" fill="url(#g13)" stroke="#111" stroke-width="0.7" stroke-linejoin="round" stroke-linecap="round" />
<ellipse cx="1407.5" cy="545.5" rx="10" ry="5" fill="#a8a8a8" stroke="#111" stroke-width="0.7" transform="rotate(8 1407.5 545.5)"/>
<ellipse cx="1407.5" cy="544.5" rx="6.5" ry="3" fill="#b4b4b4" stroke="#111" stroke-width="0.5" transform="rotate(8 1407.5 544.5)"/>
<ellipse cx="1408" cy="544" rx="1.5" ry="1" fill="#333" stroke="#111" stroke-width="0.3"/>
<polygon points="1349,636 1376,645 1373,663 1347.5,652.5" fill="url(#g14)" stroke="none" stroke-width="0.6" stroke-linejoin="round" />
<ellipse cx="1348.5" cy="644.5" rx="3.5" ry="8.2" fill="#c8c8c8" stroke="#111" stroke-width="0.5" transform="rotate(10 1348.5 644.5)"/>
<polygon points="1380,641 1452.5,589 1474,599 1399,649" fill="#a8a8a8" stroke="#111" stroke-width="0.8" stroke-linejoin="round" />
<polygon points="1380,641 1399,649 1387.5,704 1365,695" fill="#a2a2a2" stroke="#111" stroke-width="0.8" stroke-linejoin="round" />
<polygon points="1399,649 1474,599 1464,654 1387.5,704" fill="#5a5a5a" stroke="#111" stroke-width="0.8" stroke-linejoin="round" />
<ellipse cx="1457" cy="596" rx="8" ry="4" fill="url(#g11)" stroke="#111" stroke-width="0.6" transform="rotate(8 1457 596)"/>
<ellipse cx="1391" cy="643" rx="8" ry="4" fill="url(#g11)" stroke="#111" stroke-width="0.6" transform="rotate(8 1391 643)"/>
<polygon points="1405,634.4 1410,630.6 1421,634.6 1416.5,638" fill="#b4b4b4" stroke="#111" stroke-width="0.6" stroke-linejoin="round" />
<polygon points="1416.5,638 1421,634.6 1419.5,645 1414.5,649" fill="#d8d8d8" stroke="#111" stroke-width="0.6" stroke-linejoin="round" />
<polygon points="1412,636.4 1416.5,638 1414.5,649 1413,646" fill="#777" stroke="#111" stroke-width="0.5" stroke-linejoin="round" />
<ellipse cx="1442" cy="640" rx="5" ry="9" fill="#d8d8d8" stroke="#111" stroke-width="0.6" transform="rotate(22 1442 640)"/>
<ellipse cx="1456" cy="632" rx="3.5" ry="6.5" fill="#777" stroke="#111" stroke-width="0.6" transform="rotate(22 1456 632)"/>
<ellipse cx="1407" cy="666" rx="3.5" ry="6.5" fill="#777" stroke="#111" stroke-width="0.6" transform="rotate(22 1407 666)"/>
<ellipse cx="1424" cy="659" rx="6.5" ry="10" fill="#4a4a4a" stroke="#111" stroke-width="0.7" transform="rotate(22 1424 659)"/>
<ellipse cx="1422" cy="659" rx="6" ry="9.5" fill="#bcbcbc" stroke="#111" stroke-width="0.7" transform="rotate(22 1422 659)"/>
<ellipse cx="1422" cy="659" rx="3.5" ry="6" fill="#666" stroke="#111" stroke-width="0.6" transform="rotate(22 1422 659)"/>
<polygon points="1117,477 1152.5,454 1215,425 1317.5,452.5 1226,517" fill="#9a9a9a" stroke="#111" stroke-width="0.8" stroke-linejoin="round" />
<polygon points="1228,516.5 1317.5,453.5 1310.5,495 1215.5,562" fill="#464646" stroke="#111" stroke-width="0.8" stroke-linejoin="round" />
<polygon points="1311,458 1317.5,453.5 1310,494 1304,498" fill="#5a5a5a" stroke="#111" stroke-width="0.6" stroke-linejoin="round" />
<polygon points="1117,477 1226,517 1228,516.5 1216,560 1211,564 1105,524" fill="#9e9e9e" stroke="#111" stroke-width="0.8" stroke-linejoin="round" />
<polygon points="1117,477.5 1226,517.5 1224.5,523.5 1115.5,483.5" fill="url(#g15)" stroke="none" stroke-width="0.9" stroke-linejoin="round" />
<polyline points="1222,519 1209,563" fill="none" stroke="#111" stroke-width="0.5" stroke-linecap="round" stroke-linejoin="round" />
<ellipse cx="1121" cy="491" rx="4.8" ry="5.5" fill="#8e8e8e" stroke="#111" stroke-width="0.8" transform="rotate(-15 1121 491)"/>
<ellipse cx="1121" cy="491" rx="2.8" ry="3.3" fill="#a6a6a6" stroke="#111" stroke-width="0.5" transform="rotate(-15 1121 491)"/>
<ellipse cx="1165.6" cy="509" rx="4.8" ry="5.5" fill="#8e8e8e" stroke="#111" stroke-width="0.8" transform="rotate(-15 1165.6 509)"/>
<ellipse cx="1165.6" cy="509" rx="2.8" ry="3.3" fill="#a6a6a6" stroke="#111" stroke-width="0.5" transform="rotate(-15 1165.6 509)"/>
<ellipse cx="1210" cy="527.5" rx="4.8" ry="5.5" fill="#8e8e8e" stroke="#111" stroke-width="0.8" transform="rotate(-15 1210 527.5)"/>
<ellipse cx="1210" cy="527.5" rx="2.8" ry="3.3" fill="#a6a6a6" stroke="#111" stroke-width="0.5" transform="rotate(-15 1210 527.5)"/>
<ellipse cx="1204" cy="550.6" rx="4.8" ry="5.5" fill="#8e8e8e" stroke="#111" stroke-width="0.8" transform="rotate(-15 1204 550.6)"/>
<ellipse cx="1204" cy="550.6" rx="2.8" ry="3.3" fill="#a6a6a6" stroke="#111" stroke-width="0.5" transform="rotate(-15 1204 550.6)"/>
<path d="M1152.5 454 C1160 474 1185 490 1225 494 C1255 496 1280 480 1288 458 L1288 450 L1152 446 Z" fill="#8c8c8c" stroke="#111" stroke-width="0.7" stroke-linejoin="round" stroke-linecap="round" />
<path d="M1160 452 C1168 470 1192 484 1228 487 C1256 488 1278 474 1284 456 L1270 440 L1165 440 Z" fill="#a6a6a6" stroke="#111" stroke-width="0.7" stroke-linejoin="round" stroke-linecap="round" />
<path d="M1170 452 C1180 468 1200 478 1230 481" fill="none" stroke="#333" stroke-width="0.5" stroke-linejoin="round" stroke-linecap="round" />
<path d="M1262 485 L1284 470 L1286 476 L1268 489 Z" fill="#666" stroke="#111" stroke-width="0.5" stroke-linejoin="round" stroke-linecap="round" />
<ellipse cx="1120" cy="523.5" rx="18.5" ry="25" fill="url(#g16)" stroke="#111" stroke-width="0.8" transform="rotate(-22 1120 523.5)"/>
<path d="M1116 499.5 L1145 493.5 Q1164 502 1155 525 L1130 546 Z" fill="url(#g16)" stroke="none" stroke-width="0.9" stroke-linejoin="round" stroke-linecap="round" />
<path d="M1116 499.5 L1145 493.5 Q1164 502 1155 525 L1130 546" fill="none" stroke="#111" stroke-width="0.8" stroke-linejoin="round" stroke-linecap="round" />
<polygon points="1118,510 1134,505 1148,511 1141,518 1127,514" fill="#8c8c8c" stroke="#111" stroke-width="0.5" stroke-linejoin="round" />
<ellipse cx="1112.5" cy="530.5" rx="18.5" ry="20.5" fill="#6c6c6c" stroke="#111" stroke-width="0.8" transform="rotate(-20 1112.5 530.5)"/>
<ellipse cx="1110" cy="532" rx="16.5" ry="19" fill="#858585" stroke="#111" stroke-width="0.6" transform="rotate(-20 1110 532)"/>
<ellipse cx="1107" cy="534" rx="14.3" ry="17" fill="#a8a8a8" stroke="#111" stroke-width="0.9" transform="rotate(-20 1107 534)"/>
<ellipse cx="1166" cy="542.5" rx="18.5" ry="25" fill="url(#g17)" stroke="#111" stroke-width="0.8" transform="rotate(-22 1166 542.5)"/>
<path d="M1162 518.5 L1191 512.5 Q1210 521 1201 544 L1176 565 Z" fill="url(#g17)" stroke="none" stroke-width="0.9" stroke-linejoin="round" stroke-linecap="round" />
<path d="M1162 518.5 L1191 512.5 Q1210 521 1201 544 L1176 565" fill="none" stroke="#111" stroke-width="0.8" stroke-linejoin="round" stroke-linecap="round" />
<polygon points="1164,529 1180,524 1194,530 1187,537 1173,533" fill="#8c8c8c" stroke="#111" stroke-width="0.5" stroke-linejoin="round" />
<ellipse cx="1158.5" cy="549.5" rx="18.5" ry="20.5" fill="#6c6c6c" stroke="#111" stroke-width="0.8" transform="rotate(-20 1158.5 549.5)"/>
<ellipse cx="1156" cy="551" rx="16.5" ry="19" fill="#858585" stroke="#111" stroke-width="0.6" transform="rotate(-20 1156 551)"/>
<ellipse cx="1153" cy="553" rx="14.3" ry="17" fill="#a8a8a8" stroke="#111" stroke-width="0.9" transform="rotate(-20 1153 553)"/>
<path d="M1206 462.5 L1261 416 L1299 432.5 Q1307 436 1303 442 L1246 488 Q1241 490 1236 487 Z" fill="url(#g18)" stroke="#111" stroke-width="0.8" stroke-linejoin="round" stroke-linecap="round" />
<path d="M1236 487 Q1241 490 1246 488 L1303 442 L1304 447 L1247 493 Q1241 495 1235 491 Z" fill="#7c7c7c" stroke="#111" stroke-width="0.6" stroke-linejoin="round" stroke-linecap="round" />
<ellipse cx="1240" cy="462" rx="6" ry="3.2" fill="url(#g11)" stroke="#111" stroke-width="0.6" transform="rotate(12 1240 462)"/>
<ellipse cx="1258.5" cy="449" rx="6" ry="3.2" fill="url(#g11)" stroke="#111" stroke-width="0.6" transform="rotate(12 1258.5 449)"/>
<ellipse cx="1276" cy="437.5" rx="6" ry="3.2" fill="url(#g11)" stroke="#111" stroke-width="0.6" transform="rotate(12 1276 437.5)"/>
<polygon points="1099,412.5 1136,387.5 1134,414 1095,437.5" fill="#8c8c8c" stroke="#111" stroke-width="0.8" stroke-linejoin="round" />
<polygon points="1103,416 1128,399.5 1128,407 1102.5,424" fill="#16203f" stroke="#111" stroke-width="0.6" stroke-linejoin="round" />
<polygon points="1062,376 1136,406.5 1133,415.5 1059,385" fill="url(#g19)" stroke="none" stroke-width="0.6" stroke-linejoin="round" />
<polyline points="1066.4,377.8 1063.4,387" fill="none" stroke="#111" stroke-width="0.9" stroke-linecap="round" stroke-linejoin="round" />
<polyline points="1071.6,380 1068.6,389.2" fill="none" stroke="#111" stroke-width="0.9" stroke-linecap="round" stroke-linejoin="round" />
<polyline points="1074.6,381.2 1071.6,390.4" fill="none" stroke="#111" stroke-width="0.9" stroke-linecap="round" stroke-linejoin="round" />
<polyline points="1077.5,382.4 1074.5,391.6" fill="none" stroke="#111" stroke-width="0.9" stroke-linecap="round" stroke-linejoin="round" />
<polyline points="1083.5,384.8 1080.5,394" fill="none" stroke="#111" stroke-width="2.2" stroke-linecap="round" stroke-linejoin="round" />
<polyline points="1099,391.2 1096,400.4" fill="none" stroke="#111" stroke-width="0.9" stroke-linecap="round" stroke-linejoin="round" />
<polyline points="1130.8,404.4 1127.8,413.6" fill="none" stroke="#111" stroke-width="0.9" stroke-linecap="round" stroke-linejoin="round" />
<polygon points="1136,406.5 1140,408.5 1137,417 1133,415.5" fill="#d8d8d8" stroke="#111" stroke-width="0.6" stroke-linejoin="round" />
<polygon points="1053,387 1061.5,390 1053.5,411 1045,408" fill="url(#g20)" stroke="#111" stroke-width="0.7" stroke-linejoin="round" />
<polygon points="1047.3,402 1055.5,405 1053.8,410 1045.5,407" fill="#1a1a1a" stroke="none" stroke-width="0.9" stroke-linejoin="round" />
<polyline points="1049.5,396.5 1057.5,399.5" fill="none" stroke="#111" stroke-width="0.9" stroke-linecap="round" stroke-linejoin="round" />
<polyline points="1048.6,399 1056.8,402" fill="none" stroke="#111" stroke-width="0.9" stroke-linecap="round" stroke-linejoin="round" />
<path d="M1052.5 378 Q1053 372.5 1058.5 372.8 L1065 376 L1062 386 L1061 390.5 L1052.5 387.5 Z" fill="url(#g21)" stroke="#111" stroke-width="0.7" stroke-linejoin="round" stroke-linecap="round" />
<polyline points="1056.5,374.5 1053.5,385" fill="none" stroke="#111" stroke-width="0.7" stroke-linecap="round" stroke-linejoin="round" />
<polyline points="1060,375 1057,386.5" fill="none" stroke="#111" stroke-width="0.7" stroke-linecap="round" stroke-linejoin="round" />
<path d="M1048 410 L1036.5 434 Q1032 450 1040.5 462" fill="none" stroke="#1a1a1a" stroke-width="4" stroke-linejoin="round" stroke-linecap="round" />
<path d="M1048 410 L1036.5 434 Q1032 450 1040.5 462" fill="none" stroke="#c4c4c4" stroke-width="2.6" stroke-linejoin="round" stroke-linecap="round" />
<polyline points="1034.5,434 1039,435.6" fill="none" stroke="#111" stroke-width="1" stroke-linecap="round" stroke-linejoin="round" />
<polygon points="1039,461 1043,460 1041.5,464.5" fill="#111" stroke="none" stroke-width="0.9" stroke-linejoin="round" />
<polygon points="1150,337.5 1172.5,321 1180,325 1146,440 1127.5,440 1134,411" fill="#a4a4a4" stroke="#111" stroke-width="0.8" stroke-linejoin="round" />
<polygon points="1150,337.5 1157,341 1147,385 1139,427.5 1134,411" fill="#9c9c9c" stroke="#111" stroke-width="0.6" stroke-linejoin="round" />
<polygon points="1160,343 1169,340 1160,372 1152,374" fill="#8a8a8a" stroke="#111" stroke-width="0.6" stroke-linejoin="round" />
<polygon points="1152,374 1160,372 1158,377 1151,379" fill="#b0b0b0" stroke="#111" stroke-width="0.5" stroke-linejoin="round" />
<polygon points="1155.5,310 1166,314 1165,327 1159,330 1155,328" fill="url(#g22)" stroke="#111" stroke-width="0.7" stroke-linejoin="round" />
<polygon points="1158.5,300.5 1178,308.5 1174,320.5 1154.5,312.5" fill="url(#g23)" stroke="#222" stroke-width="0.6" stroke-linejoin="round" />
<ellipse cx="1157" cy="306.5" rx="3.2" ry="6.2" fill="#d8d8d8" stroke="#111" stroke-width="0.6" transform="rotate(20 1157 306.5)"/>
<polyline points="1164.3,302.9 1160.3,314.9" fill="none" stroke="#111" stroke-width="0.9" stroke-linecap="round" stroke-linejoin="round" />
<polyline points="1168.2,304.5 1164.2,316.5" fill="none" stroke="#111" stroke-width="0.9" stroke-linecap="round" stroke-linejoin="round" />
<polyline points="1171.8,305.9 1167.8,317.9" fill="none" stroke="#111" stroke-width="0.9" stroke-linecap="round" stroke-linejoin="round" />
<polyline points="1174.9,307.2 1170.9,319.2" fill="none" stroke="#111" stroke-width="0.9" stroke-linecap="round" stroke-linejoin="round" />
<polygon points="1222.5,366 1256,311 1266,302.5 1324,325 1310,335 1292.5,346 1247.5,377.5" fill="#a4a4a4" stroke="#111" stroke-width="0.8" stroke-linejoin="round" />
<polygon points="1226,395 1247.5,377.5 1292.5,346 1311,340 1300,389 1282.5,399 1260,416 1221,441" fill="#4c4c4c" stroke="#111" stroke-width="0.8" stroke-linejoin="round" />
<polygon points="1292.5,346 1311,340 1300,389 1282.5,399" fill="#424242" stroke="#111" stroke-width="0.6" stroke-linejoin="round" />
<polygon points="1222.5,366 1247.5,377.5 1226,395 1221,441 1207.5,440" fill="#6a6a6a" stroke="#111" stroke-width="0.8" stroke-linejoin="round" />
<polygon points="1229,352 1254,333 1261,336 1236,356" fill="#3c3c3c" stroke="#111" stroke-width="0.5" stroke-linejoin="round" />
<polygon points="1241,366 1270,344 1277,347 1248,370" fill="#3c3c3c" stroke="#111" stroke-width="0.5" stroke-linejoin="round" />
<polyline points="1246,323 1300,344" fill="none" stroke="#111" stroke-width="0.6" stroke-linecap="round" stroke-linejoin="round" />
<polyline points="1256,311 1312,334" fill="none" stroke="#111" stroke-width="0.6" stroke-linecap="round" stroke-linejoin="round" />
<polyline points="1283,322 1275,330" fill="none" stroke="#111" stroke-width="0.5" stroke-linecap="round" stroke-linejoin="round" />
<polyline points="1252,379 1240,428" fill="none" stroke="#1a1a1a" stroke-width="0.6" stroke-linecap="round" stroke-linejoin="round" />
<polyline points="1244,381 1233,432" fill="none" stroke="#1a1a1a" stroke-width="0.5" stroke-linecap="round" stroke-linejoin="round" />
<ellipse cx="1266" cy="392" rx="7" ry="15.5" fill="#3e3e3e" stroke="#111" stroke-width="0.8" transform="rotate(25 1266 392)"/>
<ellipse cx="1266" cy="392" rx="4.5" ry="10" fill="#505050" stroke="#111" stroke-width="0.6" transform="rotate(25 1266 392)"/>
<ellipse cx="1266" cy="392" rx="2.2" ry="5" fill="#444" stroke="#999" stroke-width="0.5" transform="rotate(25 1266 392)"/>
<ellipse cx="1233" cy="402" rx="1" ry="1.4" fill="#ddd" stroke="#111" stroke-width="0.3"/>
<ellipse cx="1297" cy="380" rx="1" ry="1.4" fill="#ddd" stroke="#111" stroke-width="0.3"/>
<polygon points="1306,162.5 1312.5,158 1357.5,176 1351,180" fill="#b0b0b0" stroke="#111" stroke-width="0.8" stroke-linejoin="round" />
<path d="M1351 180 L1357.5 176 L1327 312 Q1328 318 1337 320 L1326 380 L1314 384 L1331 320.5 Q1322 318 1321 311 Z" fill="#7c7c7c" stroke="#111" stroke-width="0.8" stroke-linejoin="round" stroke-linecap="round" />
<path d="M1306 162.5 L1351 180 L1321 311 Q1322 318 1331 320.5 L1314 384 L1303 380 L1312 331 L1256 311 L1261 303 L1261 298 L1269 292 L1276 291 Z" fill="#a9a9a9" stroke="#111" stroke-width="0.8" stroke-linejoin="round" stroke-linecap="round" />
<polyline points="1261,303 1267.5,302 1276,291" fill="none" stroke="#111" stroke-width="0.5" stroke-linecap="round" stroke-linejoin="round" />
<polygon points="1323,184 1328,181.5 1334,185 1333,193 1327,196 1322,192" fill="#9c9c9c" stroke="#111" stroke-width="0.6" stroke-linejoin="round" />
<ellipse cx="1326" cy="190.5" rx="4" ry="4.6" fill="#b4b4b4" stroke="#111" stroke-width="0.5"/>
<ellipse cx="1320.5" cy="206" rx="4" ry="4.4" fill="#8a8a8a" stroke="#111" stroke-width="0.5"/>
<ellipse cx="1315" cy="210" rx="4" ry="4.4" fill="#b4b4b4" stroke="#111" stroke-width="0.6"/>
<ellipse cx="1318" cy="222" rx="5.5" ry="6" fill="#999" stroke="#111" stroke-width="0.6"/>
<ellipse cx="1314.5" cy="225" rx="5.5" ry="6" fill="#b0b0b0" stroke="#111" stroke-width="0.6"/>
<ellipse cx="1314.5" cy="225" rx="3" ry="3.4" fill="#a0a0a0" stroke="#111" stroke-width="0.5"/>
<polygon points="1195,240 1201,235 1247.5,254.4 1240,260" fill="#b0b0b0" stroke="#111" stroke-width="0.8" stroke-linejoin="round" />
<path d="M1240 260 L1247.5 254.4 L1221.5 384 Q1217 398 1228 393 L1230 394 L1220 401 Q1207 403 1212.5 388 Z" fill="#5a5a5a" stroke="#111" stroke-width="0.8" stroke-linejoin="round" stroke-linecap="round" />
<path d="M1195 240 L1240 260 L1212.5 388 Q1207 400 1220 401 L1206 462.5 L1127.5 440 L1146 440 L1180 325 L1172.5 321 Z" fill="#a9a9a9" stroke="#111" stroke-width="0.8" stroke-linejoin="round" stroke-linecap="round" />
<polygon points="1206,462.5 1220,401 1230,394 1214,457.5" fill="#565656" stroke="#111" stroke-width="0.7" stroke-linejoin="round" />
<ellipse cx="1201" cy="289.5" rx="16" ry="16.6" fill="url(#g24)" stroke="#111" stroke-width="0.8"/>
<ellipse cx="1197.5" cy="292" rx="13" ry="13.6" fill="#aaaaaa" stroke="#111" stroke-width="0.9"/>
<ellipse cx="1213.5" cy="266" rx="2.2" ry="3" fill="#555" stroke="#111" stroke-width="0.5"/>
<ellipse cx="1157.5" cy="402" rx="3.4" ry="3.8" fill="url(#g25)" stroke="#111" stroke-width="0.6"/>
<ellipse cx="1155" cy="411" rx="3.4" ry="3.8" fill="url(#g26)" stroke="#111" stroke-width="0.6"/>
<ellipse cx="1152.5" cy="419" rx="3.4" ry="3.8" fill="url(#g27)" stroke="#111" stroke-width="0.6"/>
<ellipse cx="1202" cy="421.5" rx="3.4" ry="3.8" fill="url(#g28)" stroke="#111" stroke-width="0.6"/>
<ellipse cx="1200" cy="430" rx="3.4" ry="3.8" fill="url(#g29)" stroke="#111" stroke-width="0.6"/>
<ellipse cx="1198" cy="438.5" rx="3.4" ry="3.8" fill="url(#g30)" stroke="#111" stroke-width="0.6"/>
<polyline points="1147.5,385 1139,427.5 1206,450" fill="none" stroke="#333" stroke-width="0.5" stroke-linecap="round" stroke-linejoin="round" />
<path d="M1431 691 L1466 666 L1537.5 695 L1502.5 720 Z" fill="rgba(150,170,200,0.06)" stroke="#c8ccd4" stroke-width="0.7" stroke-linejoin="round" stroke-linecap="round" stroke-dasharray="7 4" stroke-opacity="0.75"/>
<polyline points="1485,691 1497,630" fill="none" stroke="#10c0d4" stroke-width="2" stroke-linecap="round" stroke-linejoin="round" />
<polygon points="1497.5,626 1493,638 1501,639" fill="#20b8c8" stroke="none" stroke-width="0.9" stroke-linejoin="round" />
<polyline points="1485,691 1452,680" fill="none" stroke="#20d020" stroke-width="2.2" stroke-linecap="round" stroke-linejoin="round" />
<polygon points="1441,676 1454,675 1451,684" fill="#30d840" stroke="none" stroke-width="0.9" stroke-linejoin="round" />
<polyline points="1485,691 1498,685" fill="none" stroke="#e02020" stroke-width="3" stroke-linecap="round" stroke-linejoin="round" />
<ellipse cx="1497" cy="685" rx="3.5" ry="3" fill="#d02020" stroke="none" stroke-width="0.9"/>
<ellipse cx="1485" cy="692" rx="3" ry="3" fill="#666" stroke="none" stroke-width="0.9"/>
<text x="1494" y="625" font-size="11" fill="#e0e0e0" font-family="Liberation Sans,sans-serif">Z</text>
<text x="1430" y="679" font-size="10" fill="#e02020" font-family="Liberation Sans,sans-serif">Y</text>
<text x="1499" y="684" font-size="10" fill="#e02020" font-family="Liberation Sans,sans-serif">X</text>
<path d="M97.6 931.6 L102.4 910.6 L123.5 919.5 L136.5 911.4 L133.5 932 L120 942 Z" fill="rgba(200,210,235,0.22)" stroke="none" stroke-width="0.9" stroke-linejoin="round" stroke-linecap="round" />
<path d="M97.6 931.6 L102.4 910.6 L123.5 919.5 L136.5 911.4 L134 931" fill="none" stroke="#dcdcdc" stroke-width="0.8" stroke-linejoin="round" stroke-linecap="round" />
<polygon points="99,931.6 108.5,925 128.4,932.5 120.5,940.5" fill="#8c9a6c" stroke="#e8e000" stroke-width="0.9" stroke-linejoin="round" />
<polyline points="120,942 133,881" fill="none" stroke="#10c8dc" stroke-width="2" stroke-linecap="round" stroke-linejoin="round" />
<polygon points="134.2,875.5 129,885.5 137,886.5" fill="#10d8e8" stroke="none" stroke-width="0.9" stroke-linejoin="round" />
<polyline points="120,942 86,928.5" fill="none" stroke="#10e010" stroke-width="2.2" stroke-linecap="round" stroke-linejoin="round" />
<polygon points="76,924.6 87,923.6 85,932.5" fill="#10d020" stroke="none" stroke-width="0.9" stroke-linejoin="round" />
<polyline points="121,941.5 131,935.5" fill="none" stroke="#d01818" stroke-width="2.6" stroke-linecap="round" stroke-linejoin="round" />
<ellipse cx="132.5" cy="934" rx="3" ry="2.6" fill="#e02020" stroke="none" stroke-width="0.9"/>
<ellipse cx="120" cy="942.2" rx="3.6" ry="3.6" fill="#777" stroke="#555" stroke-width="0.5"/>
<text x="131.2" y="874" font-size="10.5" fill="#d8d8d8" font-family="Liberation Sans,sans-serif">Z</text>
<text x="66" y="926.5" font-size="10.5" fill="#e02020" font-family="Liberation Sans,sans-serif">Y</text>
<text x="134.5" y="933" font-size="10" fill="#e02020" font-family="Liberation Sans,sans-serif">X</text></svg>
<div class="abs" style="left:64px;top:113px;width:24px;height:24px;background:#87889c;"></div>
<svg style="left:64px;top:113px" width="24" height="24" viewBox="0 0 24 24"><rect x="3.5" y="3.5" width="17" height="4" rx="1" fill="#44608a"/><rect x="3.5" y="10" width="17" height="4" rx="1" fill="#44608a"/><rect x="3.5" y="16.5" width="17" height="4" rx="1" fill="#44608a"/><path d="M4 4.2h16M4 10.7h16M4 17.2h16" stroke="#6a84ac" stroke-width=".6"/></svg>
<div class="abs" style="left:92px;top:113px;width:24px;height:24px;background:#87889c;"></div>
<svg style="left:92px;top:113px" width="24" height="24" viewBox="0 0 24 24"><rect x="6.5" y="7.5" width="11.5" height="9.5" fill="url(#gDoc)" stroke="#9a9a9a" stroke-width="1"/><path d="M3 4l4.2 0l-1.4 1.4l1.9 1.9l-1.4 1.4l-1.9 -1.9l-1.4 1.4z" fill="#38c028"/><path d="M21 4l-4.2 0l1.4 1.4l-1.9 1.9l1.4 1.4l1.9 -1.9l1.4 1.4z" fill="#38c028"/><path d="M3 20.5l4.2 0l-1.4 -1.4l1.9 -1.9l-1.4 -1.4l-1.9 1.9l-1.4 -1.4z" fill="#38c028"/><path d="M21 20.5l-4.2 0l1.4 -1.4l-1.9 -1.9l1.4 -1.4l1.9 1.9l1.4 -1.4z" fill="#38c028"/></svg>
<div class="abs" style="left:120px;top:113px;width:24px;height:24px;background:#87889c;"></div>
<svg style="left:120px;top:113px" width="24" height="24" viewBox="0 0 24 24"><ellipse cx="14" cy="20" rx="6" ry="1.3" fill="#000" opacity=".2"/><circle cx="10" cy="10" r="4.6" fill="url(#gLens)" stroke="#c0c8d4" stroke-width="1.3"/><path d="M10.5 16 l-4.5 4.5" stroke="#c8c8c8" stroke-width="2.4" stroke-linecap="round"/><circle cx="14.5" cy="11.5" r="5.4" fill="url(#gLens)" stroke="#b0bac8" stroke-width="1.3"/></svg>
<div class="abs" style="left:148px;top:113px;width:24px;height:24px;background:#87889c;"></div>
<svg style="left:148px;top:113px" width="24" height="24" viewBox="0 0 24 24"><path d="M2.5 15 l10 -5 l9 4.5 l-9 5.5z" fill="none" stroke="#6a6a6a" stroke-width=".7"/><path d="M10.5 15 V5.5" stroke="#2a6ae8" stroke-width="1.8"/><path d="M10.5 2.5l-2.6 4h5.2z" fill="#2a6ae8"/><path d="M10.5 15 L18 10" stroke="#38c028" stroke-width="1.8"/><path d="M20.5 8.2l-4.2 .8l2.2 3z" fill="#38c028"/><path d="M10.5 15 L17.5 20" stroke="#e02a2a" stroke-width="1.8"/><path d="M20.5 21.8l-1.2 -4.4l-2.8 3z" fill="#e02a2a"/><circle cx="10.5" cy="15" r="1.8" fill="#eee" stroke="#666" stroke-width=".5"/></svg>
<div class="abs" style="left:176px;top:113px;width:24px;height:24px;background:#87889c;"></div>
<svg style="left:176px;top:113px" width="24" height="24" viewBox="0 0 24 24"><path d="M12.5 3.2 L21.5 6.8 L12 10.5 L3.2 6.8 Z" fill="#3fd030"/><path d="M12.5 3.2 L21.5 6.8 L12 10.5 L3.2 6.8 Z M12.5 14 L21.5 17.6 L12 21.3 L3.2 17.6 Z M12.5 3.2 L12.5 14 M21.5 6.8 L21.5 17.6 M12 10.5 L12 21.3 M3.2 6.8 L3.2 17.6" fill="none" stroke="#000" stroke-width="1.5" stroke-linejoin="round"/></svg>
<div class="abs" style="left:204px;top:113px;width:24px;height:24px;background:#87889c;"></div>
<svg style="left:204px;top:113px" width="24" height="24" viewBox="0 0 24 24"><path d="M12.5 14 L21.5 17.6 L12 21.3 L3.2 17.6 Z" fill="#3fd030"/><path d="M12.5 3.2 L21.5 6.8 L12 10.5 L3.2 6.8 Z M12.5 14 L21.5 17.6 L12 21.3 L3.2 17.6 Z M12.5 3.2 L12.5 14 M21.5 6.8 L21.5 17.6 M12 10.5 L12 21.3 M3.2 6.8 L3.2 17.6" fill="none" stroke="#000" stroke-width="1.5" stroke-linejoin="round"/></svg>
<div class="abs" style="left:232px;top:113px;width:24px;height:24px;background:#87889c;"></div>
<svg style="left:232px;top:113px" width="24" height="24" viewBox="0 0 24 24"><path d="M3.2 6.8 L12.5 3.2 L12.5 14 L3.2 17.6 Z" fill="#3fd030"/><path d="M12.5 3.2 L21.5 6.8 L12 10.5 L3.2 6.8 Z M12.5 14 L21.5 17.6 L12 21.3 L3.2 17.6 Z M12.5 3.2 L12.5 14 M21.5 6.8 L21.5 17.6 M12 10.5 L12 21.3 M3.2 6.8 L3.2 17.6" fill="none" stroke="#000" stroke-width="1.5" stroke-linejoin="round"/></svg>
<div class="abs" style="left:260px;top:113px;width:24px;height:24px;background:#87889c;"></div>
<svg style="left:260px;top:113px" width="24" height="24" viewBox="0 0 24 24"><path d="M12 10.5 L21.5 6.8 L21.5 17.6 L12 21.3 Z" fill="#3fd030"/><path d="M12.5 3.2 L21.5 6.8 L12 10.5 L3.2 6.8 Z M12.5 14 L21.5 17.6 L12 21.3 L3.2 17.6 Z M12.5 3.2 L12.5 14 M21.5 6.8 L21.5 17.6 M12 10.5 L12 21.3 M3.2 6.8 L3.2 17.6" fill="none" stroke="#000" stroke-width="1.5" stroke-linejoin="round"/></svg>
<div class="abs" style="left:288px;top:113px;width:24px;height:24px;background:#87889c;"></div>
<svg style="left:288px;top:113px" width="24" height="24" viewBox="0 0 24 24"><path d="M3.2 6.8 L12 10.5 L12 21.3 L3.2 17.6 Z" fill="#3fd030"/><path d="M12.5 3.2 L21.5 6.8 L12 10.5 L3.2 6.8 Z M12.5 14 L21.5 17.6 L12 21.3 L3.2 17.6 Z M12.5 3.2 L12.5 14 M21.5 6.8 L21.5 17.6 M12 10.5 L12 21.3 M3.2 6.8 L3.2 17.6" fill="none" stroke="#000" stroke-width="1.5" stroke-linejoin="round"/></svg>
<div class="abs" style="left:316px;top:113px;width:24px;height:24px;background:#87889c;"></div>
<svg style="left:316px;top:113px" width="24" height="24" viewBox="0 0 24 24"><path d="M12.5 3.2 L21.5 6.8 L21.5 17.6 L12.5 14 Z" fill="#3fd030"/><path d="M12.5 3.2 L21.5 6.8 L12 10.5 L3.2 6.8 Z M12.5 14 L21.5 17.6 L12 21.3 L3.2 17.6 Z M12.5 3.2 L12.5 14 M21.5 6.8 L21.5 17.6 M12 10.5 L12 21.3 M3.2 6.8 L3.2 17.6" fill="none" stroke="#000" stroke-width="1.5" stroke-linejoin="round"/></svg>
<div class="abs" style="left:344px;top:113px;width:24px;height:24px;background:#87889c;"></div>
<svg style="left:344px;top:113px" width="24" height="24" viewBox="0 0 24 24"><path d="M12.5 3.2 L21.5 6.8 L12 10.5 L3.2 6.8 Z" fill="#58e048"/><path d="M3.2 6.8 L12 10.5 L12 21.3 L3.2 17.6 Z" fill="#38c028"/><path d="M12 10.5 L21.5 6.8 L21.5 17.6 L12 21.3 Z" fill="#1f9818"/><path d="M12.5 3.2 L21.5 6.8 L21.5 17.6 L12 21.3 L3.2 17.6 L3.2 6.8 Z M3.2 6.8 L12 10.5 L21.5 6.8 M12 10.5 L12 21.3" fill="none" stroke="#2a9a20" stroke-width=".8"/></svg>
<div class="abs" style="left:64px;top:141px;width:24px;height:24px;background:#87889c;"></div>
<svg style="left:64px;top:141px" width="24" height="24" viewBox="0 0 24 24"><g transform="translate(2.5 2.5)"><path d="M5 4.2 A5 2.2 0 0 1 15 4.2 V15.3 A5 2.2 0 0 1 5 15.3Z" fill="none" stroke="#111" stroke-width="1"/><ellipse cx="10" cy="4.2" rx="5" ry="2.2" fill="none" stroke="#111" stroke-width="1"/><path d="M5 15.3 A5 2.2 0 0 1 15 15.3" fill="none" stroke="#111" stroke-width=".8"/></g></svg>
<div class="abs" style="left:64px;top:169px;width:24px;height:24px;background:#87889c;"></div>
<svg style="left:64px;top:169px" width="24" height="24" viewBox="0 0 24 24"><g transform="translate(2.5 2.5)"><path d="M5 4.2 A5 2.2 0 0 1 15 4.2 V15.3 A5 2.2 0 0 1 5 15.3Z" fill="none" stroke="#111" stroke-width="1"/><ellipse cx="10" cy="4.2" rx="5" ry="2.2" fill="none" stroke="#111" stroke-width="1"/></g></svg>
<div class="abs" style="left:64px;top:197px;width:24px;height:24px;background:#b4a468;border:1px solid #e6cf72;"></div>
<svg style="left:64px;top:197px" width="24" height="24" viewBox="0 0 24 24"><g transform="translate(2.5 2.5)"><path d="M5 4.2 A5 2.2 0 0 1 15 4.2 V15.3 A5 2.2 0 0 1 5 15.3Z" fill="url(#gB)" stroke="#0e1a3a" stroke-width="1"/><ellipse cx="10" cy="4.2" rx="5" ry="2.2" fill="url(#gBt)" stroke="#0e1a3a" stroke-width="1"/></g></svg>
<div class="abs" style="left:64px;top:225px;width:24px;height:24px;background:#87889c;"></div>
<svg style="left:64px;top:225px" width="24" height="24" viewBox="0 0 24 24"><g transform="translate(2.5 2.5)"><path d="M5 4.2 A5 2.2 0 0 1 15 4.2 V15.3 A5 2.2 0 0 1 5 15.3Z" fill="url(#gL)" stroke="#3a4a68" stroke-width="0.8"/><ellipse cx="10" cy="4.2" rx="5" ry="2.2" fill="#e8eefa" stroke="#3a4a68" stroke-width="0.8"/></g></svg>
<div class="abs" style="left:64px;top:253px;width:24px;height:24px;background:#87889c;"></div>
<svg style="left:64px;top:253px" width="24" height="24" viewBox="0 0 24 24"><g transform="translate(2.5 2.5)"><path d="M5 4.2 A5 2.2 0 0 1 15 4.2 V15.3 A5 2.2 0 0 1 5 15.3Z" fill="none" stroke="#111" stroke-width="1"/><ellipse cx="10" cy="4.2" rx="5" ry="2.2" fill="none" stroke="#111" stroke-width="1"/><path d="M7.5 4.5 L9 17 M10 4.5 L7.5 17 M10 4.5 L12.5 17 M12.5 4.5 L11 17" stroke="#111" stroke-width=".6" fill="none"/></g></svg>
<div id="sb" class="abs"></div><div id="sbline" class="abs"></div>
<div class="grip" style="left:1338px;top:1003px;height:16px"></div>
<div class="abs" style="left:1342px;top:1002px;width:118px;height:17px;background:#fff"></div>
<svg style="left:1459px;top:1003px" width="14" height="14" viewBox="0 0 14 14"><circle cx="8" cy="5.5" r="3.6" fill="#eef4ff" stroke="#3a6ab8" stroke-width="1.3"/><path d="M5.4 8.2 L1.5 12.3" stroke="#3a6ab8" stroke-width="1.6" stroke-linecap="round"/></svg>
<div class="grip" style="left:1476px;top:1003px;height:16px"></div>
<div class="st" style="left:1486px;top:1005px;letter-spacing:.2px">绝对 XY 上视图</div>
<div class="abs" style="left:1592px;top:1003px;width:1px;height:14px;background:#a8adbb"></div><div class="abs" style="left:1593px;top:1003px;width:1px;height:14px;background:#fff"></div>
<div class="st" style="left:1601px;top:1005px;">绝对视图</div>
<div class="grip" style="left:1657px;top:1003px;height:16px"></div>
<div class="st" style="left:1668px;top:1005px;font-weight:bold">LAYER0</div>
<div class="abs" style="left:1726px;top:1003px;width:1px;height:14px;background:#a8adbb"></div><div class="abs" style="left:1727px;top:1003px;width:1px;height:14px;background:#fff"></div>
<div class="abs" style="left:1754px;top:1003px;width:1px;height:14px;background:#a8adbb"></div><div class="abs" style="left:1755px;top:1003px;width:1px;height:14px;background:#fff"></div>
<div class="abs" style="left:1761px;top:1005px;width:33px;height:12px;background:#44608a"></div>
<div class="abs" style="left:1804px;top:1005px;width:33px;height:12px;background:#44608a"></div>
<div class="abs" style="left:1847px;top:1005px;width:33px;height:12px;background:#44608a"></div>
<div class="abs" style="left:1798px;top:1003px;width:1px;height:14px;background:#a8adbb"></div><div class="abs" style="left:1799px;top:1003px;width:1px;height:14px;background:#fff"></div>
<div class="abs" style="left:1841px;top:1003px;width:1px;height:14px;background:#a8adbb"></div><div class="abs" style="left:1842px;top:1003px;width:1px;height:14px;background:#fff"></div>
<div class="abs" style="left:1885px;top:1003px;width:1px;height:14px;background:#a8adbb"></div><div class="abs" style="left:1886px;top:1003px;width:1px;height:14px;background:#fff"></div>
<svg style="left:1893px;top:1002px" width="16" height="16" viewBox="0 0 16 16"><circle cx="7.5" cy="7.5" r="6.6" fill="#2a58c8" stroke="#1a2a6a" stroke-width=".6"/><path d="M3 5 q2 -3 5 -2.5 q1 2 -1 3 q-1 2 -3 2.5z M9 8 q3 -1 4.5 1 q-1 3 -3.5 4 q-1.5 -2 -1 -5z" fill="#38b838"/><ellipse cx="5.5" cy="4.5" rx="2.4" ry="1.4" fill="#fff" opacity=".35"/></svg>
<div class="abs" style="left:1132px;top:1023px;width:1px;height:14px;background:#a8adbb"></div><div class="abs" style="left:1133px;top:1023px;width:1px;height:14px;background:#fff"></div>
<div class="st" style="left:1141px;top:1024px;">拴牢</div>
<div class="abs" style="left:1175px;top:1023px;width:1px;height:14px;background:#a8adbb"></div><div class="abs" style="left:1176px;top:1023px;width:1px;height:14px;background:#fff"></div>
<div class="abs" style="left:1206px;top:1023px;width:1px;height:14px;background:#a8adbb"></div><div class="abs" style="left:1207px;top:1023px;width:1px;height:14px;background:#fff"></div>
<div class="abs" style="left:1236px;top:1023px;width:1px;height:14px;background:#a8adbb"></div><div class="abs" style="left:1237px;top:1023px;width:1px;height:14px;background:#fff"></div>
<div class="abs" style="left:1267px;top:1023px;width:1px;height:14px;background:#a8adbb"></div><div class="abs" style="left:1268px;top:1023px;width:1px;height:14px;background:#fff"></div>
<div class="abs" style="left:1298px;top:1023px;width:1px;height:14px;background:#a8adbb"></div><div class="abs" style="left:1299px;top:1023px;width:1px;height:14px;background:#fff"></div>
<div class="abs" style="left:1329px;top:1023px;width:1px;height:14px;background:#a8adbb"></div><div class="abs" style="left:1330px;top:1023px;width:1px;height:14px;background:#fff"></div>
<div class="abs" style="left:1361px;top:1023px;width:1px;height:14px;background:#a8adbb"></div><div class="abs" style="left:1362px;top:1023px;width:1px;height:14px;background:#fff"></div>
<div class="abs" style="left:1392px;top:1023px;width:1px;height:14px;background:#a8adbb"></div><div class="abs" style="left:1393px;top:1023px;width:1px;height:14px;background:#fff"></div>
<div class="abs" style="left:1424px;top:1023px;width:1px;height:14px;background:#a8adbb"></div><div class="abs" style="left:1425px;top:1023px;width:1px;height:14px;background:#fff"></div>
<div class="abs" style="left:1456px;top:1023px;width:1px;height:14px;background:#a8adbb"></div><div class="abs" style="left:1457px;top:1023px;width:1px;height:14px;background:#fff"></div>
<svg style="left:1181px;top:1021.5px" width="18" height="18" viewBox="0 0 18 18"><rect x="0.5" y="0.5" width="17" height="17" fill="#e8c0c4" stroke="#b8868c" stroke-width="1"/><circle cx="9" cy="9" r="5.4" fill="#f4e4e6" stroke="#c83848" stroke-width="1.3"/><path d="M5.5 8 a3.6 3.6 0 0 1 6.5 -1.2 M12.5 10 a3.6 3.6 0 0 1 -6.5 1.2" stroke="#c83848" stroke-width="1.2" fill="none"/></svg>
<svg style="left:1211.5px;top:1021.5px" width="18" height="18" viewBox="0 0 18 18"><rect x="0.5" y="0.5" width="17" height="17" fill="#fbe08a" stroke="#e0b850" stroke-width="1"/><path d="M4 4 l7 2 l-1 6 l-5 -1z" fill="#f0b8d0" stroke="#b878a0" stroke-width=".6"/><path d="M8 7 l7 8 l-3 .5 l1.5 2.5 l-1.5 .6 l-1.5 -2.6 l-2 2z" fill="#fff" stroke="#222" stroke-width=".7"/><path d="M3 3l2 2M12 2l-1 2.4M3 9l2.4-.5" stroke="#e8a020" stroke-width="1"/></svg>
<svg style="left:1242.5px;top:1021.5px" width="18" height="18" viewBox="0 0 18 18"><path d="M3 8 l6 -3 l6 3 v7 h-12z" fill="#d8c8a0" stroke="#8a7a50" stroke-width=".6"/><path d="M2 8.5 l7 -4 l7 3.5 l-2 1.5 l-5 -2.6 l-5 3z" fill="#e8a838" stroke="#a86a18" stroke-width=".5"/><rect x="5" y="10" width="3.4" height="5" fill="#3a68d8"/><rect x="10" y="10" width="3" height="2.6" fill="#3a68d8"/><path d="M11 2 l5 2.5 l-1.5 1.5" fill="#f0c868" stroke="#a86a18" stroke-width=".5"/></svg>
<svg style="left:1274px;top:1021.5px" width="18" height="18" viewBox="0 0 18 18"><ellipse cx="9" cy="16.8" rx="4" ry="1" fill="#000" opacity=".2"/><text x="9" y="14.6" font-size="17" font-weight="bold" text-anchor="middle" fill="#3f74cc" stroke="#2a4a9a" stroke-width=".4" font-family="Liberation Sans,sans-serif">?</text></svg>
<svg style="left:1304px;top:1021.5px" width="20" height="18" viewBox="0 0 20 18"><path d="M7 5 l4 -2 l4.5 1.4 v5 l-4 2 l-4.5 -1.4z" fill="#5a8ad8" stroke="#1a3a7a" stroke-width=".6"/><path d="M11 9.5 l4 -2 l4 1.4 v5 l-4 2 l-4 -1.4z" fill="#a8b4c8" stroke="#444" stroke-width=".6"/><path d="M1 7 l7 3.5 M1 12 l7 -1.5 M2 3 l6 6" stroke="#e02020" stroke-width="1.3"/><path d="M9.5 10.5 l-3.6 -.4 l1.6 -2.4z" fill="#e02020"/></svg>
<svg style="left:1336.5px;top:1021.5px" width="18" height="18" viewBox="0 0 18 18"><rect x="0.5" y="0.5" width="17" height="17" fill="#fbe08a" stroke="#e0b850" stroke-width="1"/><path d="M2.5 6 l6.5 -3 l6.5 3 v7 l-6.5 3 l-6.5 -3z" fill="#48b8d8" stroke="#1a4a6a" stroke-width=".6"/><path d="M2.5 6 l6.5 -3 l6.5 3 l-6.5 3z" fill="#e048d8"/><path d="M9 9 v7 l6.5 -3 v-7z" fill="#2a88b8"/><path d="M2.5 6 l6.5 3 l6.5 -3 M9 9v7" fill="none" stroke="#1a4a6a" stroke-width=".6"/></svg>
<svg style="left:1433px;top:1023px" width="16" height="16" viewBox="0 0 16 16"><rect x="1" y="1" width="13" height="13" fill="#e8ecf6" stroke="#3a4a78" stroke-width="1.2"/><path d="M7.5 1v13M1 7.5h13" stroke="#3a4a78" stroke-width="1.2"/></svg>
<div class="st" style="left:1463px;top:1024px;">LS: 1.00 PS: 1.00</div>
<div class="abs" style="left:1578px;top:1023px;width:1px;height:14px;background:#a8adbb"></div><div class="abs" style="left:1579px;top:1023px;width:1px;height:14px;background:#fff"></div>
<div class="st" style="left:1589px;top:1024px;">单位: 毫米</div>
<div class="abs" style="left:1652px;top:1023px;width:1px;height:14px;background:#a8adbb"></div><div class="abs" style="left:1653px;top:1023px;width:1px;height:14px;background:#fff"></div>
<div class="st" style="left:1663px;top:1024px;letter-spacing:.45px">X = 0072.935 Y = 0253.025 Z = 0000.000</div>
<div id="task" class="abs"></div>
<div class="abs" style="left:48px;top:1040px;width:344px;height:8px;background:#f2f2f2"></div>
<div class="abs" style="left:687px;top:1040px;width:48px;height:8px;background:#4c4c4c"></div>
<div class="abs" style="left:1813px;top:1043px;width:40px;height:5px;overflow:hidden;color:#fff;font-size:12px;line-height:12px">17:10</div>
<svg style="left:1340px;top:955px" width="140" height="93" viewBox="1340 955 140 93"><g font-family="Liberation Sans,sans-serif" font-weight="bold"><ellipse cx="1406" cy="1037.5" rx="15" ry="2.2" fill="#b0703a" opacity=".8"/><path d="M1403.5 973 q-1 -7 -4.5 -7.5 q-2 1.5 1 3.5 M1407.5 973 q2 -6 1 -7" stroke="#9a5a20" stroke-width="2" fill="none" stroke-linecap="round"/><circle cx="1389" cy="977.8" r="5.6" fill="#bf8348" stroke="#8a4a18" stroke-width=".5"/><circle cx="1423.4" cy="977.8" r="5.6" fill="#bf8348" stroke="#8a4a18" stroke-width=".5"/><ellipse cx="1389" cy="978.5" rx="2.6" ry="2.2" fill="#f4b8a0"/><ellipse cx="1423.2" cy="978.5" rx="2.6" ry="2.2" fill="#f4b8a0"/><path d="M1391 1020 q-6 3 -4 7 q4 1 6 -2 q1 8 4 10 l1 3 h4 l.5 -3 h7 l.5 3 h4 l1 -3 q3 -4 4 -11 q3 3 6 1 q1 -4 -5 -6z" fill="#fdf25a" stroke="#c8a020" stroke-width=".5"/><ellipse cx="1406.5" cy="996" rx="26.6" ry="24" fill="#bf8348" stroke="#8a4a18" stroke-width=".6"/><path d="M1390 1017 q16 7 32 0" stroke="#8a4a18" stroke-width="1" fill="none"/><ellipse cx="1405.8" cy="1001" rx="20" ry="17.6" fill="#fdf25a" stroke="#8a4a18" stroke-width=".8"/><ellipse cx="1391.2" cy="1000" rx="3.6" ry="2.6" fill="#fba83a"/><ellipse cx="1421" cy="1000" rx="3.6" ry="2.6" fill="#fba83a"/><circle cx="1395.7" cy="993.6" r="1.5" fill="#5a2a10"/><circle cx="1416.7" cy="993.4" r="1.5" fill="#5a2a10"/><ellipse cx="1406.2" cy="997.8" rx="1.2" ry=".7" fill="#8a4a18"/><path d="M1411.5 1020.5 L1403 1028.5" stroke="#a8682a" stroke-width="2"/><circle cx="1391.8" cy="1023.4" r="2.6" fill="#bf8348"/><circle cx="1401.6" cy="1023.4" r="2.6" fill="#bf8348"/><ellipse cx="1396.8" cy="1029" rx="7.6" ry="6.8" fill="#bf8348" stroke="#8a4a18" stroke-width=".4"/><ellipse cx="1393" cy="1030.4" rx="1.5" ry="1" fill="#f8a0c0"/><ellipse cx="1400.5" cy="1030.4" rx="1.5" ry="1" fill="#f8a0c0"/><path d="M1393.4 1027.6 h1.8 M1398.6 1027.6 h1.8" stroke="#5a2a10" stroke-width=".7"/><circle cx="1367.7" cy="1005.3" r="8.4" fill="#9a6858"/><text x="1367.7" y="1010.3" font-size="13.5" text-anchor="middle" fill="#fff">C</text><circle cx="1374.8" cy="1026.4" r="8.4" fill="#9a6858"/><path d="M1369 1023.4 l3.4 -2.2 q2.4 1.6 4.8 0 l3.4 2.2 l-1.8 2.6 l-1.4 -.9 v6.4 h-5.2 v-6.4 l-1.4 .9z" fill="#fff"/><text x="1445.6" y="989.6" font-size="22" text-anchor="middle" fill="#fff" stroke="#c88a50" stroke-width="4.6" stroke-linejoin="round" transform="rotate(8 1445 982)" textLength="19" lengthAdjust="spacingAndGlyphs">W</text><text x="1445.6" y="989.6" font-size="22" text-anchor="middle" fill="#fff" stroke="#fff" stroke-width="3.2" stroke-linejoin="round" transform="rotate(8 1445 982)" textLength="19" lengthAdjust="spacingAndGlyphs">W</text><circle cx="1441" cy="981" r="1.2" fill="#e0b080"/><circle cx="1449" cy="978" r="1.2" fill="#e0b080"/><circle cx="1446" cy="986" r="1.2" fill="#e0b080"/><circle cx="1452" cy="984" r="1.1" fill="#e0b080"/><circle cx="1439.5" cy="992.6" r="2.8" fill="#cf9a62"/><circle cx="1453.6" cy="992.6" r="2.8" fill="#cf9a62"/><ellipse cx="1446.6" cy="1001.5" rx="10.4" ry="11" fill="#cf9a62" stroke="#b07838" stroke-width=".6"/><ellipse cx="1446.4" cy="1001.6" rx="3.6" ry="5.4" fill="#fff"/><text x="1447" y="1031.6" font-size="22" text-anchor="middle" fill="#fdf25a" stroke="#d8b030" stroke-width="4.4" stroke-linejoin="round" transform="rotate(-6 1447 1024)" textLength="18" lengthAdjust="spacingAndGlyphs">W</text><text x="1447" y="1031.6" font-size="22" text-anchor="middle" fill="#fdf25a" stroke="#fdf25a" stroke-width="3" stroke-linejoin="round" transform="rotate(-6 1447 1024)" textLength="18" lengthAdjust="spacingAndGlyphs">W</text></g></svg>
</body></html>
